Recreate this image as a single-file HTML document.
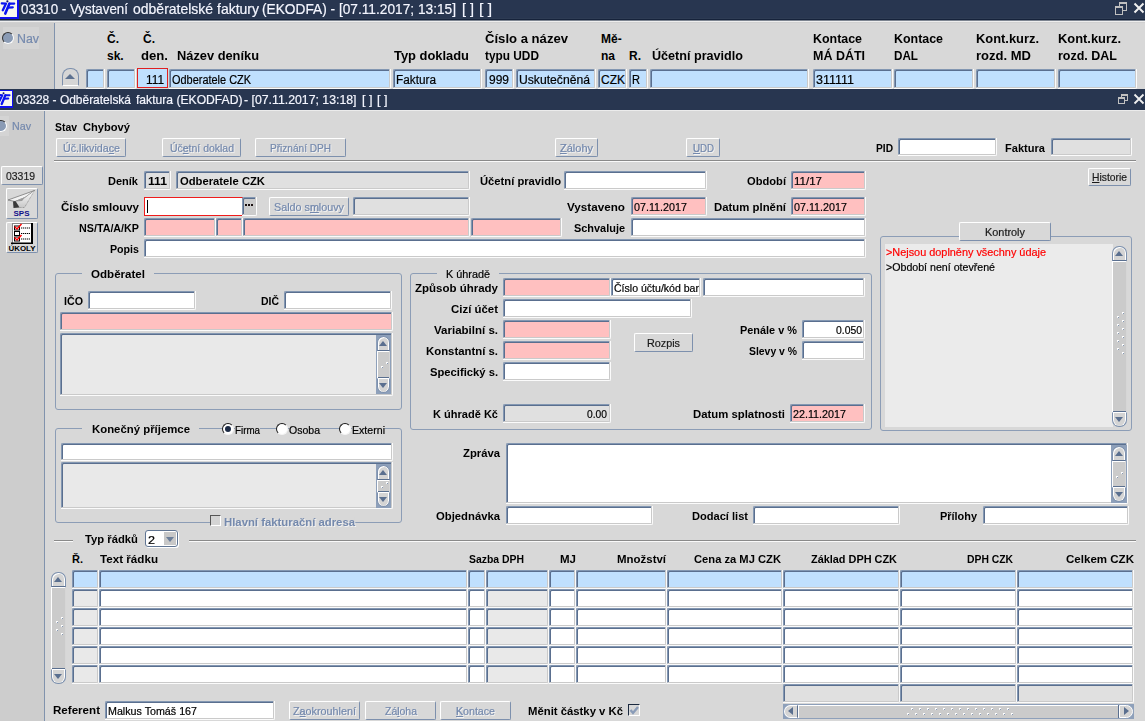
<!DOCTYPE html><html><head><meta charset="utf-8"><style>
html,body{margin:0;padding:0;width:1145px;height:721px;overflow:hidden;background:#d8d8d8;font-family:'Liberation Sans', sans-serif;}
div,span{position:absolute;box-sizing:content-box}
.t{white-space:nowrap;transform-origin:0 0} u{text-decoration:underline;text-decoration-thickness:1px;text-underline-offset:1px}
</style></head><body>
<div style="left:0px;top:0px;width:1145px;height:20px;background:#283650;"></div>
<div style="left:0px;top:18px;width:1145px;height:1px;background:#2d3b53;"></div>
<div style="left:0px;top:19px;width:1145px;height:1px;background:#15223a;"></div>
<div style="left:0px;top:20px;width:1145px;height:1px;background:#7c8490;"></div>
<div style="left:0px;top:21px;width:1145px;height:1px;background:#eeeeee;"></div>
<div style="left:0px;top:22px;width:1145px;height:1px;background:#d0d0d0;"></div>
<div style="left:0px;top:23px;width:1145px;height:66px;background:#d8d8d8;"></div>
<div style="left:0px;top:23px;width:54px;height:66px;background:#cdcdcd;"></div>
<div style="left:54px;top:23px;width:1px;height:66px;background:#8193ad;"></div>
<div style="left:0px;top:0px;width:19px;height:19px;background:#f8f8ee;border-right:2px solid #1010f0;border-bottom:2px solid #1010f0;box-sizing:border-box"></div>
<svg style="position:absolute;left:0px;top:0px" width="19" height="19" viewBox="0 0 19 19"><g stroke-linecap="round" fill="none"><path d="M1.8 3.4 L6.0 3.6 L2.8 10.2" stroke="#0a14f0" stroke-width="2.3" stroke-linejoin="round"/><circle cx="7.4" cy="1.3" r="1.1" fill="#101070" stroke="none"/><path d="M9.4 3.8 L5.3 13.6" stroke="#0a14f0" stroke-width="2.6"/><path d="M9.2 3.6 L14.2 3.6 M8.0 7.6 L12.8 7.4" stroke="#0a14f0" stroke-width="2.2"/></g></svg>
<span id="t0" class="t" style="left:21px;top:1px;font-size:15px;line-height:15px;font-weight:normal;color:#f4f6ff;-webkit-text-stroke:0.2px currentColor;transform:scaleX(0.8890);">03310 - Vystavení</span>
<span id="t1" class="t" style="left:133px;top:1px;font-size:15px;line-height:15px;font-weight:normal;color:#f4f6ff;-webkit-text-stroke:0.2px currentColor;transform:scaleX(0.9328);">odběratelské faktury</span>
<span id="t2" class="t" style="left:262px;top:1px;font-size:15px;line-height:15px;font-weight:normal;color:#f4f6ff;-webkit-text-stroke:0.2px currentColor;transform:scaleX(0.9136);">(EKODFA) - [07.11.2017; 13:15]</span>
<span id="t3" class="t" style="left:462px;top:1px;font-size:15px;line-height:15px;font-weight:normal;color:#f4f6ff;-webkit-text-stroke:0.2px currentColor;transform:scaleX(0.9588);">[ ]</span>
<span id="t4" class="t" style="left:479px;top:1px;font-size:15px;line-height:15px;font-weight:normal;color:#f4f6ff;-webkit-text-stroke:0.2px currentColor;transform:scaleX(1.0387);">[ ]</span>
<div style="left:1119px;top:2px;width:6px;height:6px;border:1px solid #c0c0c0;border-top-width:2px"></div>
<div style="left:1115px;top:6px;width:6px;height:6px;border:1px solid #c0c0c0;border-top-width:2px;background:#283650"></div>
<svg style="position:absolute;left:1133px;top:2px" width="12" height="12" viewBox="0 0 12 12"><path d="M1.5 1.5 L10.5 10.5 M10.5 1.5 L1.5 10.5" stroke="#f0f0f0" stroke-width="2"/></svg>
<div style="left:3px;top:27px;width:36px;height:22px;background:#d4d4d4;"></div>
<div style="left:2px;top:32px;width:10px;height:10px;border-radius:50%;background:#8a9bb5;border:1px solid #fff;border-top-color:#333;border-left-color:#333"></div>
<span id="t5" class="t" style="left:17px;top:33px;font-size:12px;line-height:12px;font-weight:normal;color:#7489ad;-webkit-text-stroke:0.2px currentColor;transform:scaleX(1.0307);">Nav</span>
<span id="t6" class="t" style="left:107px;top:33px;font-size:12px;line-height:12px;font-weight:bold;color:#000;">Č.</span>
<span id="t7" class="t" style="left:107px;top:50px;font-size:12px;line-height:12px;font-weight:bold;color:#000;">sk.</span>
<span id="t8" class="t" style="left:143px;top:33px;font-size:12px;line-height:12px;font-weight:bold;color:#000;">Č.</span>
<span id="t9" class="t" style="left:141px;top:50px;font-size:12px;line-height:12px;font-weight:bold;color:#000;transform:scaleX(1.0944);">den.</span>
<span id="t10" class="t" style="left:177px;top:50px;font-size:12px;line-height:12px;font-weight:bold;color:#000;transform:scaleX(1.0691);">Název deníku</span>
<span id="t11" class="t" style="left:394px;top:50px;font-size:12px;line-height:12px;font-weight:bold;color:#000;transform:scaleX(1.0748);">Typ dokladu</span>
<span id="t12" class="t" style="left:485px;top:33px;font-size:12px;line-height:12px;font-weight:bold;color:#000;transform:scaleX(1.0917);">Číslo a název</span>
<span id="t13" class="t" style="left:485px;top:50px;font-size:12px;line-height:12px;font-weight:bold;color:#000;transform:scaleX(0.9877);">typu UDD</span>
<span id="t14" class="t" style="left:601px;top:33px;font-size:12px;line-height:12px;font-weight:bold;color:#000;">Mě-</span>
<span id="t15" class="t" style="left:601px;top:50px;font-size:12px;line-height:12px;font-weight:bold;color:#000;">na</span>
<span id="t16" class="t" style="left:629px;top:50px;font-size:12px;line-height:12px;font-weight:bold;color:#000;">R.</span>
<span id="t17" class="t" style="left:652px;top:50px;font-size:12px;line-height:12px;font-weight:bold;color:#000;transform:scaleX(1.0497);">Účetní pravidlo</span>
<span id="t18" class="t" style="left:813px;top:33px;font-size:12px;line-height:12px;font-weight:bold;color:#000;transform:scaleX(1.0350);">Kontace</span>
<span id="t19" class="t" style="left:813px;top:50px;font-size:12px;line-height:12px;font-weight:bold;color:#000;transform:scaleX(1.0400);">MÁ DÁTI</span>
<span id="t20" class="t" style="left:894px;top:33px;font-size:12px;line-height:12px;font-weight:bold;color:#000;transform:scaleX(1.0350);">Kontace</span>
<span id="t21" class="t" style="left:894px;top:50px;font-size:12px;line-height:12px;font-weight:bold;color:#000;transform:scaleX(0.9728);">DAL</span>
<span id="t22" class="t" style="left:976px;top:33px;font-size:12px;line-height:12px;font-weight:bold;color:#000;transform:scaleX(1.0738);">Kont.kurz.</span>
<span id="t23" class="t" style="left:976px;top:50px;font-size:12px;line-height:12px;font-weight:bold;color:#000;transform:scaleX(1.0854);">rozd. MD</span>
<span id="t24" class="t" style="left:1058px;top:33px;font-size:12px;line-height:12px;font-weight:bold;color:#000;transform:scaleX(1.0738);">Kont.kurz.</span>
<span id="t25" class="t" style="left:1058px;top:50px;font-size:12px;line-height:12px;font-weight:bold;color:#000;transform:scaleX(1.0411);">rozd. DAL</span>
<div style="left:62px;top:68px;width:15px;height:16px;background:#d6d6d6;border:1px solid #7d90ad;border-bottom-color:#fff;border-radius:8px 8px 1px 1px"></div>
<div style="left:65px;top:74px;width:0;height:0;border-left:5px solid transparent;border-right:5px solid transparent;border-bottom:5px solid #5d7190"></div>
<div style="left:86px;top:69px;width:18px;height:19px;border-right:1px solid #fbfbfb;border-bottom:1px solid #fbfbfb;border-radius:0 0 2px 0"></div>
<div style="left:86px;top:69px;width:16px;height:17px;background:#c0e0fe;border-top:1px solid #8397b2;border-left:1px solid #8397b2;border-right:1px solid #cacaca;border-bottom:1px solid #cacaca;box-shadow:inset 1px 1px 0 #5a6f8f;border-radius:2px 1px 2px 1px"></div>
<div style="left:107px;top:69px;width:28px;height:19px;border-right:1px solid #fbfbfb;border-bottom:1px solid #fbfbfb;border-radius:0 0 2px 0"></div>
<div style="left:107px;top:69px;width:26px;height:17px;background:#c0e0fe;border-top:1px solid #8397b2;border-left:1px solid #8397b2;border-right:1px solid #cacaca;border-bottom:1px solid #cacaca;box-shadow:inset 1px 1px 0 #5a6f8f;border-radius:2px 1px 2px 1px"></div>
<div style="left:169px;top:69px;width:221px;height:19px;border-right:1px solid #fbfbfb;border-bottom:1px solid #fbfbfb;border-radius:0 0 2px 0"></div>
<div style="left:169px;top:69px;width:219px;height:17px;background:#c0e0fe;border-top:1px solid #8397b2;border-left:1px solid #8397b2;border-right:1px solid #cacaca;border-bottom:1px solid #cacaca;box-shadow:inset 1px 1px 0 #5a6f8f;border-radius:2px 1px 2px 1px"></div>
<div style="left:393px;top:69px;width:88px;height:19px;border-right:1px solid #fbfbfb;border-bottom:1px solid #fbfbfb;border-radius:0 0 2px 0"></div>
<div style="left:393px;top:69px;width:86px;height:17px;background:#c0e0fe;border-top:1px solid #8397b2;border-left:1px solid #8397b2;border-right:1px solid #cacaca;border-bottom:1px solid #cacaca;box-shadow:inset 1px 1px 0 #5a6f8f;border-radius:2px 1px 2px 1px"></div>
<div style="left:485px;top:69px;width:28px;height:19px;border-right:1px solid #fbfbfb;border-bottom:1px solid #fbfbfb;border-radius:0 0 2px 0"></div>
<div style="left:485px;top:69px;width:26px;height:17px;background:#c0e0fe;border-top:1px solid #8397b2;border-left:1px solid #8397b2;border-right:1px solid #cacaca;border-bottom:1px solid #cacaca;box-shadow:inset 1px 1px 0 #5a6f8f;border-radius:2px 1px 2px 1px"></div>
<div style="left:516px;top:69px;width:79px;height:19px;border-right:1px solid #fbfbfb;border-bottom:1px solid #fbfbfb;border-radius:0 0 2px 0"></div>
<div style="left:516px;top:69px;width:77px;height:17px;background:#c0e0fe;border-top:1px solid #8397b2;border-left:1px solid #8397b2;border-right:1px solid #cacaca;border-bottom:1px solid #cacaca;box-shadow:inset 1px 1px 0 #5a6f8f;border-radius:2px 1px 2px 1px"></div>
<div style="left:598px;top:69px;width:28px;height:19px;border-right:1px solid #fbfbfb;border-bottom:1px solid #fbfbfb;border-radius:0 0 2px 0"></div>
<div style="left:598px;top:69px;width:26px;height:17px;background:#c0e0fe;border-top:1px solid #8397b2;border-left:1px solid #8397b2;border-right:1px solid #cacaca;border-bottom:1px solid #cacaca;box-shadow:inset 1px 1px 0 #5a6f8f;border-radius:2px 1px 2px 1px"></div>
<div style="left:629px;top:69px;width:18px;height:19px;border-right:1px solid #fbfbfb;border-bottom:1px solid #fbfbfb;border-radius:0 0 2px 0"></div>
<div style="left:629px;top:69px;width:16px;height:17px;background:#c0e0fe;border-top:1px solid #8397b2;border-left:1px solid #8397b2;border-right:1px solid #cacaca;border-bottom:1px solid #cacaca;box-shadow:inset 1px 1px 0 #5a6f8f;border-radius:2px 1px 2px 1px"></div>
<div style="left:650px;top:69px;width:158px;height:19px;border-right:1px solid #fbfbfb;border-bottom:1px solid #fbfbfb;border-radius:0 0 2px 0"></div>
<div style="left:650px;top:69px;width:156px;height:17px;background:#c0e0fe;border-top:1px solid #8397b2;border-left:1px solid #8397b2;border-right:1px solid #cacaca;border-bottom:1px solid #cacaca;box-shadow:inset 1px 1px 0 #5a6f8f;border-radius:2px 1px 2px 1px"></div>
<div style="left:813px;top:69px;width:79px;height:19px;border-right:1px solid #fbfbfb;border-bottom:1px solid #fbfbfb;border-radius:0 0 2px 0"></div>
<div style="left:813px;top:69px;width:77px;height:17px;background:#c0e0fe;border-top:1px solid #8397b2;border-left:1px solid #8397b2;border-right:1px solid #cacaca;border-bottom:1px solid #cacaca;box-shadow:inset 1px 1px 0 #5a6f8f;border-radius:2px 1px 2px 1px"></div>
<div style="left:894px;top:69px;width:79px;height:19px;border-right:1px solid #fbfbfb;border-bottom:1px solid #fbfbfb;border-radius:0 0 2px 0"></div>
<div style="left:894px;top:69px;width:77px;height:17px;background:#c0e0fe;border-top:1px solid #8397b2;border-left:1px solid #8397b2;border-right:1px solid #cacaca;border-bottom:1px solid #cacaca;box-shadow:inset 1px 1px 0 #5a6f8f;border-radius:2px 1px 2px 1px"></div>
<div style="left:976px;top:69px;width:79px;height:19px;border-right:1px solid #fbfbfb;border-bottom:1px solid #fbfbfb;border-radius:0 0 2px 0"></div>
<div style="left:976px;top:69px;width:77px;height:17px;background:#c0e0fe;border-top:1px solid #8397b2;border-left:1px solid #8397b2;border-right:1px solid #cacaca;border-bottom:1px solid #cacaca;box-shadow:inset 1px 1px 0 #5a6f8f;border-radius:2px 1px 2px 1px"></div>
<div style="left:1058px;top:69px;width:78px;height:19px;border-right:1px solid #fbfbfb;border-bottom:1px solid #fbfbfb;border-radius:0 0 2px 0"></div>
<div style="left:1058px;top:69px;width:76px;height:17px;background:#c0e0fe;border-top:1px solid #8397b2;border-left:1px solid #8397b2;border-right:1px solid #cacaca;border-bottom:1px solid #cacaca;box-shadow:inset 1px 1px 0 #5a6f8f;border-radius:2px 1px 2px 1px"></div>
<div style="left:137px;top:68px;width:31px;height:20px;background:#c0e0fe;border:1px solid #e02020;box-sizing:border-box"></div>
<span id="t26" class="t" style="left:146px;top:74px;font-size:12px;line-height:12px;font-weight:normal;color:#000;-webkit-text-stroke:0.2px currentColor;transform:scaleX(0.9863);">111</span>
<span id="t27" class="t" style="left:172px;top:74px;font-size:12px;line-height:12px;font-weight:normal;color:#000;-webkit-text-stroke:0.2px currentColor;transform:scaleX(0.9110);">Odberatele CZK</span>
<span id="t28" class="t" style="left:396px;top:74px;font-size:12px;line-height:12px;font-weight:normal;color:#000;-webkit-text-stroke:0.2px currentColor;transform:scaleX(0.9831);">Faktura</span>
<span id="t29" class="t" style="left:489px;top:74px;font-size:12px;line-height:12px;font-weight:normal;color:#000;-webkit-text-stroke:0.2px currentColor;transform:scaleX(0.9984);">999</span>
<span id="t30" class="t" style="left:519px;top:74px;font-size:12px;line-height:12px;font-weight:normal;color:#000;-webkit-text-stroke:0.2px currentColor;transform:scaleX(1.0136);">Uskutečněná</span>
<span id="t31" class="t" style="left:601px;top:74px;font-size:12px;line-height:12px;font-weight:normal;color:#000;-webkit-text-stroke:0.2px currentColor;transform:scaleX(1.0000);">CZK</span>
<span id="t32" class="t" style="left:632px;top:74px;font-size:12px;line-height:12px;font-weight:normal;color:#000;-webkit-text-stroke:0.2px currentColor;transform:scaleX(0.9225);">R</span>
<span id="t33" class="t" style="left:816px;top:74px;font-size:12px;line-height:12px;font-weight:normal;color:#000;-webkit-text-stroke:0.2px currentColor;transform:scaleX(1.0415);">311111</span>
<div style="left:0px;top:89px;width:1145px;height:21px;background:#283650;"></div>
<div style="left:0px;top:110px;width:1145px;height:1px;background:#ececec;"></div>
<div style="left:0px;top:111px;width:44px;height:610px;background:#cdcdcd;"></div>
<div style="left:44px;top:111px;width:1px;height:610px;background:#8193ad;"></div>
<div style="left:-4px;top:90px;width:17px;height:18px;background:#f8f8ee;border:1px solid #1010f0;border-bottom-width:2px;box-sizing:border-box"></div>
<svg style="position:absolute;left:-3px;top:91.8px" width="17" height="17" viewBox="0 0 19.2 19.2"><g stroke-linecap="round" fill="none"><path d="M1.8 3.4 L6.0 3.6 L2.8 10.2" stroke="#0a14f0" stroke-width="2.3" stroke-linejoin="round"/><circle cx="7.4" cy="1.3" r="1.1" fill="#101070" stroke="none"/><path d="M9.4 3.8 L5.3 13.6" stroke="#0a14f0" stroke-width="2.6"/><path d="M9.2 3.6 L14.2 3.6 M8.0 7.6 L12.8 7.4" stroke="#0a14f0" stroke-width="2.2"/></g></svg>
<span id="t34" class="t" style="left:16px;top:93px;font-size:13px;line-height:13px;font-weight:normal;color:#f4f6ff;-webkit-text-stroke:0.2px currentColor;transform:scaleX(0.9198);">03328 - Odběratelská</span>
<span id="t35" class="t" style="left:136px;top:93px;font-size:13px;line-height:13px;font-weight:normal;color:#f4f6ff;-webkit-text-stroke:0.2px currentColor;transform:scaleX(0.9331);">faktura (EKODFAD)</span>
<span id="t36" class="t" style="left:244px;top:93px;font-size:13px;line-height:13px;font-weight:normal;color:#f4f6ff;-webkit-text-stroke:0.2px currentColor;transform:scaleX(0.9451);">- [07.11.2017; 13:18]</span>
<span id="t37" class="t" style="left:362px;top:93px;font-size:13px;line-height:13px;font-weight:normal;color:#f4f6ff;-webkit-text-stroke:0.2px currentColor;transform:scaleX(0.9683);">[ ]</span>
<span id="t38" class="t" style="left:377px;top:93px;font-size:13px;line-height:13px;font-weight:normal;color:#f4f6ff;-webkit-text-stroke:0.2px currentColor;transform:scaleX(0.9683);">[ ]</span>
<div style="left:1121px;top:94px;width:5px;height:4px;border:1px solid #c0c0c0;border-top-width:2px"></div>
<div style="left:1118px;top:97px;width:5px;height:4px;border:1px solid #c0c0c0;border-top-width:2px;background:#283650"></div>
<svg style="position:absolute;left:1133px;top:93px" width="12" height="12" viewBox="0 0 12 12"><path d="M1.5 1.5 L10.5 10.5 M10.5 1.5 L1.5 10.5" stroke="#f0f0f0" stroke-width="1.8"/></svg>
<div style="left:0px;top:116px;width:9px;height:20px;background:#d4d4d4;"></div>
<div style="left:-5px;top:120px;width:10px;height:10px;border-radius:50%;background:#8a9bb5;border:1px solid #fff;border-top-color:#333;border-left-color:#333"></div>
<span id="t39" class="t" style="left:12px;top:121px;font-size:11px;line-height:11px;font-weight:normal;color:#7489ad;-webkit-text-stroke:0.2px currentColor;transform:scaleX(0.9712);">Nav</span>
<div style="left:1px;top:166px;width:40px;height:17px;background:#d8d8d8;border:1px solid #fff;border-right-color:#7d90ad;border-bottom-color:#7d90ad;border-radius:2px"></div>
<span id="t40" class="t" style="left:6px;top:171px;font-size:11px;line-height:11px;font-weight:normal;color:#222;-webkit-text-stroke:0.2px currentColor;transform:scaleX(0.9479);">03319</span>
<div style="left:6px;top:188px;width:30px;height:29px;background:#d8d8d8;border:1px solid #fff;border-right-color:#7d90ad;border-bottom-color:#7d90ad;border-radius:2px"></div>
<div style="left:6px;top:222px;width:30px;height:29px;background:#d8d8d8;border:1px solid #fff;border-right-color:#7d90ad;border-bottom-color:#7d90ad;border-radius:2px"></div>
<svg style="position:absolute;left:6px;top:187px" width="32" height="32" viewBox="0 0 32 32"><defs><linearGradient id="pw" x1="0" y1="0" x2="0" y2="1"><stop offset="0" stop-color="#ffffff"/><stop offset="1" stop-color="#c8c8c8"/></linearGradient></defs><path d="M2 13 L28.5 3.5 L19 10.5 L9 14.5 Z" fill="#f2f2f2" stroke="#6a6a6a" stroke-width="0.7"/><path d="M19 10.5 L28.5 3.5 L18.5 20.5 L13.5 20.5 L9 14.5 Z" fill="url(#pw)" stroke="#777" stroke-width="0.6" stroke-dasharray="1 0.6"/><path d="M7 14.5 L9.5 14 L13.5 20.5 L7.5 21 Z" fill="#3a3a3a"/><path d="M9 14.5 L19 10.5 L16 14" fill="#9a9a9a"/><text x="15.5" y="29" font-family="Liberation Sans" font-weight="bold" font-size="8" fill="#10108a" text-anchor="middle" textLength="16" lengthAdjust="spacingAndGlyphs">SPS</text></svg>
<svg style="position:absolute;left:6px;top:221px" width="32" height="32" viewBox="0 0 32 32"><rect x="6.5" y="2.5" width="19" height="20" fill="#fff" stroke="#888" stroke-width="1"/><rect x="25" y="2" width="2" height="21" fill="#000"/><rect x="5" y="21.5" width="22" height="1.5" fill="#000"/><rect x="8.5" y="5" width="5" height="4" fill="#fff" stroke="#000" stroke-width="1"/><rect x="8.5" y="10.5" width="5" height="4" fill="#fff" stroke="#000" stroke-width="1"/><rect x="8.5" y="16" width="5" height="4" fill="#fff" stroke="#000" stroke-width="1"/><path d="M8.5 5.5 L11 8 L15.5 3 M8.5 16.5 L11 19 L15.5 14" stroke="#f00" stroke-width="1.4" fill="none"/><path d="M15 7 H24 M15 12.5 H24 M15 18 H24" stroke="#000" stroke-width="1" stroke-dasharray="1.3 0.7"/><text x="16" y="30" font-family="Liberation Sans" font-weight="bold" font-size="7.5" fill="#000" text-anchor="middle" textLength="27" lengthAdjust="spacingAndGlyphs">ÚKOLY</text></svg>
<span id="t41" class="t" style="left:55px;top:122px;font-size:11px;line-height:11px;font-weight:bold;color:#000;transform:scaleX(0.9462);">Stav</span>
<span id="t42" class="t" style="left:83px;top:122px;font-size:11px;line-height:11px;font-weight:bold;color:#000;transform:scaleX(1.0114);">Chybový</span>
<div style="left:56px;top:138px;width:68px;height:17px;background:#d8d8d8;border:1px solid #fff;border-right-color:#7d90ad;border-bottom-color:#7d90ad;border-radius:2px"></div>
<span id="t43" class="t" style="left:62.5px;top:143px;font-size:11px;line-height:11px;font-weight:normal;color:#7489ad;-webkit-text-stroke:0.2px currentColor;text-shadow:1px 1px 0 #f4f4f4;transform:scaleX(0.9710);">Úč.likvida<u>c</u>e</span>
<div style="left:162px;top:138px;width:77px;height:17px;background:#d8d8d8;border:1px solid #fff;border-right-color:#7d90ad;border-bottom-color:#7d90ad;border-radius:2px"></div>
<span id="t44" class="t" style="left:169.5px;top:143px;font-size:11px;line-height:11px;font-weight:normal;color:#7489ad;-webkit-text-stroke:0.2px currentColor;text-shadow:1px 1px 0 #f4f4f4;transform:scaleX(0.9512);">Úč<u>e</u>tní doklad</span>
<div style="left:255px;top:138px;width:89px;height:17px;background:#d8d8d8;border:1px solid #fff;border-right-color:#7d90ad;border-bottom-color:#7d90ad;border-radius:2px"></div>
<span id="t45" class="t" style="left:270.0px;top:143px;font-size:11px;line-height:11px;font-weight:normal;color:#7489ad;-webkit-text-stroke:0.2px currentColor;text-shadow:1px 1px 0 #f4f4f4;transform:scaleX(0.9154);">Přiznání DPH</span>
<div style="left:555px;top:138px;width:41px;height:17px;background:#d8d8d8;border:1px solid #fff;border-right-color:#7d90ad;border-bottom-color:#7d90ad;border-radius:2px"></div>
<span id="t46" class="t" style="left:560.0px;top:143px;font-size:11px;line-height:11px;font-weight:normal;color:#7489ad;-webkit-text-stroke:0.2px currentColor;text-shadow:1px 1px 0 #f4f4f4;transform:scaleX(0.9991);"><u>Z</u>álohy</span>
<div style="left:686px;top:138px;width:32px;height:17px;background:#d8d8d8;border:1px solid #fff;border-right-color:#7d90ad;border-bottom-color:#7d90ad;border-radius:2px"></div>
<span id="t47" class="t" style="left:692.5px;top:143px;font-size:11px;line-height:11px;font-weight:normal;color:#7489ad;-webkit-text-stroke:0.2px currentColor;text-shadow:1px 1px 0 #f4f4f4;transform:scaleX(0.8807);"><u>U</u>DD</span>
<span id="t48" class="t" style="left:876px;top:143px;font-size:11px;line-height:11px;font-weight:bold;color:#000;transform:scaleX(0.9267);">PID</span>
<div style="left:898px;top:138px;width:98px;height:17px;border-right:1px solid #fbfbfb;border-bottom:1px solid #fbfbfb;border-radius:0 0 2px 0"></div>
<div style="left:898px;top:138px;width:96px;height:15px;background:#ffffff;border-top:1px solid #8397b2;border-left:1px solid #8397b2;border-right:1px solid #cacaca;border-bottom:1px solid #cacaca;box-shadow:inset 1px 1px 0 #5a6f8f;border-radius:2px 1px 2px 1px"></div>
<span id="t49" class="t" style="left:1005px;top:143px;font-size:11px;line-height:11px;font-weight:bold;color:#000;transform:scaleX(1.0063);">Faktura</span>
<div style="left:1051px;top:138px;width:80px;height:17px;border-right:1px solid #fbfbfb;border-bottom:1px solid #fbfbfb;border-radius:0 0 2px 0"></div>
<div style="left:1051px;top:138px;width:78px;height:15px;background:#e0e0e0;border-top:1px solid #8397b2;border-left:1px solid #8397b2;border-right:1px solid #cacaca;border-bottom:1px solid #cacaca;box-shadow:inset 1px 1px 0 #5a6f8f;border-radius:2px 1px 2px 1px"></div>
<div style="left:54px;top:160px;width:1082px;height:1px;background:#8a8a8a;"></div>
<div style="left:54px;top:161px;width:1082px;height:1px;background:#fafafa;"></div>
<div style="left:1088px;top:168px;width:41px;height:16px;background:#d8d8d8;border:1px solid #fff;border-right-color:#7d90ad;border-bottom-color:#7d90ad;border-radius:2px"></div>
<span id="t50" class="t" style="left:1092.0px;top:172px;font-size:11px;line-height:11px;font-weight:normal;color:#1a1a1a;-webkit-text-stroke:0.2px currentColor;transform:scaleX(0.9384);"><u>H</u>istorie</span>
<span id="t51" class="t" style="left:108px;top:176px;font-size:11px;line-height:11px;font-weight:bold;color:#000;transform:scaleX(1.0010);">Deník</span>
<div style="left:144px;top:171px;width:26px;height:18px;border-right:1px solid #fbfbfb;border-bottom:1px solid #fbfbfb;border-radius:0 0 2px 0"></div>
<div style="left:144px;top:171px;width:24px;height:16px;background:#e0e0e0;border-top:1px solid #8397b2;border-left:1px solid #8397b2;border-right:1px solid #cacaca;border-bottom:1px solid #cacaca;box-shadow:inset 1px 1px 0 #5a6f8f;border-radius:2px 1px 2px 1px"></div>
<span id="t52" class="t" style="left:148px;top:176px;font-size:11px;line-height:11px;font-weight:bold;color:#000;transform:scaleX(1.1085);">111</span>
<div style="left:176px;top:171px;width:293px;height:18px;border-right:1px solid #fbfbfb;border-bottom:1px solid #fbfbfb;border-radius:0 0 2px 0"></div>
<div style="left:176px;top:171px;width:291px;height:16px;background:#e0e0e0;border-top:1px solid #8397b2;border-left:1px solid #8397b2;border-right:1px solid #cacaca;border-bottom:1px solid #cacaca;box-shadow:inset 1px 1px 0 #5a6f8f;border-radius:2px 1px 2px 1px"></div>
<span id="t53" class="t" style="left:180px;top:176px;font-size:11px;line-height:11px;font-weight:bold;color:#000;transform:scaleX(1.0224);">Odberatele CZK</span>
<span id="t54" class="t" style="left:480px;top:176px;font-size:11px;line-height:11px;font-weight:bold;color:#000;transform:scaleX(1.0193);">Účetní pravidlo</span>
<div style="left:564px;top:171px;width:142px;height:18px;border-right:1px solid #fbfbfb;border-bottom:1px solid #fbfbfb;border-radius:0 0 2px 0"></div>
<div style="left:564px;top:171px;width:140px;height:16px;background:#ffffff;border-top:1px solid #8397b2;border-left:1px solid #8397b2;border-right:1px solid #cacaca;border-bottom:1px solid #cacaca;box-shadow:inset 1px 1px 0 #5a6f8f;border-radius:2px 1px 2px 1px"></div>
<span id="t55" class="t" style="left:747px;top:176px;font-size:11px;line-height:11px;font-weight:bold;color:#000;transform:scaleX(1.0130);">Období</span>
<div style="left:791px;top:171px;width:74px;height:18px;border-right:1px solid #fbfbfb;border-bottom:1px solid #fbfbfb;border-radius:0 0 2px 0"></div>
<div style="left:791px;top:171px;width:72px;height:16px;background:#ffc0c0;border-top:1px solid #8397b2;border-left:1px solid #8397b2;border-right:1px solid #cacaca;border-bottom:1px solid #cacaca;box-shadow:inset 1px 1px 0 #5a6f8f;border-radius:2px 1px 2px 1px"></div>
<span id="t56" class="t" style="left:794px;top:176px;font-size:11px;line-height:11px;font-weight:normal;color:#000;-webkit-text-stroke:0.2px currentColor;transform:scaleX(1.0480);">11/17</span>
<span id="t57" class="t" style="left:61px;top:202px;font-size:11px;line-height:11px;font-weight:bold;color:#000;transform:scaleX(1.0459);">Číslo smlouvy</span>
<div style="left:144px;top:197px;width:97px;height:17px;background:#ffffff;border:1px solid #ee1c1c"></div>
<div style="left:147px;top:200px;width:1px;height:13px;background:#000;"></div>
<div style="left:242px;top:197px;width:14px;height:18px;border-right:1px solid #fbfbfb;border-bottom:1px solid #fbfbfb;border-radius:0 0 2px 0"></div>
<div style="left:242px;top:197px;width:12px;height:16px;background:#cccccc;border-top:1px solid #8397b2;border-left:1px solid #8397b2;border-right:1px solid #cacaca;border-bottom:1px solid #cacaca;box-shadow:inset 1px 1px 0 #5a6f8f;border-radius:2px 1px 2px 1px"></div>
<div style="left:245px;top:204px;width:2px;height:2px;background:#1a1010;"></div>
<div style="left:248px;top:204px;width:2px;height:2px;background:#1a1010;"></div>
<div style="left:251px;top:204px;width:2px;height:2px;background:#1a1010;"></div>
<div style="left:269px;top:197px;width:78px;height:17px;background:#d8d8d8;border:1px solid #fff;border-right-color:#7d90ad;border-bottom-color:#7d90ad;border-radius:2px"></div>
<span id="t58" class="t" style="left:274.0px;top:202px;font-size:11px;line-height:11px;font-weight:normal;color:#7489ad;-webkit-text-stroke:0.2px currentColor;text-shadow:1px 1px 0 #f4f4f4;transform:scaleX(0.9782);">Saldo s<u>m</u>louvy</span>
<div style="left:353px;top:197px;width:116px;height:18px;border-right:1px solid #fbfbfb;border-bottom:1px solid #fbfbfb;border-radius:0 0 2px 0"></div>
<div style="left:353px;top:197px;width:114px;height:16px;background:#e0e0e0;border-top:1px solid #8397b2;border-left:1px solid #8397b2;border-right:1px solid #cacaca;border-bottom:1px solid #cacaca;box-shadow:inset 1px 1px 0 #5a6f8f;border-radius:2px 1px 2px 1px"></div>
<span id="t59" class="t" style="left:567px;top:202px;font-size:11px;line-height:11px;font-weight:bold;color:#000;transform:scaleX(1.0618);">Vystaveno</span>
<div style="left:631px;top:197px;width:75px;height:18px;border-right:1px solid #fbfbfb;border-bottom:1px solid #fbfbfb;border-radius:0 0 2px 0"></div>
<div style="left:631px;top:197px;width:73px;height:16px;background:#ffc0c0;border-top:1px solid #8397b2;border-left:1px solid #8397b2;border-right:1px solid #cacaca;border-bottom:1px solid #cacaca;box-shadow:inset 1px 1px 0 #5a6f8f;border-radius:2px 1px 2px 1px"></div>
<span id="t60" class="t" style="left:634px;top:202px;font-size:11px;line-height:11px;font-weight:normal;color:#000;-webkit-text-stroke:0.2px currentColor;transform:scaleX(0.9770);">07.11.2017</span>
<span id="t61" class="t" style="left:714px;top:202px;font-size:11px;line-height:11px;font-weight:bold;color:#000;transform:scaleX(1.0334);">Datum plnění</span>
<div style="left:791px;top:197px;width:74px;height:18px;border-right:1px solid #fbfbfb;border-bottom:1px solid #fbfbfb;border-radius:0 0 2px 0"></div>
<div style="left:791px;top:197px;width:72px;height:16px;background:#ffc0c0;border-top:1px solid #8397b2;border-left:1px solid #8397b2;border-right:1px solid #cacaca;border-bottom:1px solid #cacaca;box-shadow:inset 1px 1px 0 #5a6f8f;border-radius:2px 1px 2px 1px"></div>
<span id="t62" class="t" style="left:794px;top:202px;font-size:11px;line-height:11px;font-weight:normal;color:#000;-webkit-text-stroke:0.2px currentColor;transform:scaleX(0.9770);">07.11.2017</span>
<span id="t63" class="t" style="left:79px;top:223px;font-size:11px;line-height:11px;font-weight:bold;color:#000;transform:scaleX(0.9751);">NS/TA/A/KP</span>
<div style="left:144px;top:218px;width:71px;height:18px;border-right:1px solid #fbfbfb;border-bottom:1px solid #fbfbfb;border-radius:0 0 2px 0"></div>
<div style="left:144px;top:218px;width:69px;height:16px;background:#ffc0c0;border-top:1px solid #8397b2;border-left:1px solid #8397b2;border-right:1px solid #cacaca;border-bottom:1px solid #cacaca;box-shadow:inset 1px 1px 0 #5a6f8f;border-radius:2px 1px 2px 1px"></div>
<div style="left:216px;top:218px;width:26px;height:18px;border-right:1px solid #fbfbfb;border-bottom:1px solid #fbfbfb;border-radius:0 0 2px 0"></div>
<div style="left:216px;top:218px;width:24px;height:16px;background:#ffc0c0;border-top:1px solid #8397b2;border-left:1px solid #8397b2;border-right:1px solid #cacaca;border-bottom:1px solid #cacaca;box-shadow:inset 1px 1px 0 #5a6f8f;border-radius:2px 1px 2px 1px"></div>
<div style="left:243px;top:218px;width:226px;height:18px;border-right:1px solid #fbfbfb;border-bottom:1px solid #fbfbfb;border-radius:0 0 2px 0"></div>
<div style="left:243px;top:218px;width:224px;height:16px;background:#ffc0c0;border-top:1px solid #8397b2;border-left:1px solid #8397b2;border-right:1px solid #cacaca;border-bottom:1px solid #cacaca;box-shadow:inset 1px 1px 0 #5a6f8f;border-radius:2px 1px 2px 1px"></div>
<div style="left:471px;top:218px;width:90px;height:18px;border-right:1px solid #fbfbfb;border-bottom:1px solid #fbfbfb;border-radius:0 0 2px 0"></div>
<div style="left:471px;top:218px;width:88px;height:16px;background:#ffc0c0;border-top:1px solid #8397b2;border-left:1px solid #8397b2;border-right:1px solid #cacaca;border-bottom:1px solid #cacaca;box-shadow:inset 1px 1px 0 #5a6f8f;border-radius:2px 1px 2px 1px"></div>
<span id="t64" class="t" style="left:574px;top:223px;font-size:11px;line-height:11px;font-weight:bold;color:#000;transform:scaleX(0.9930);">Schvaluje</span>
<div style="left:631px;top:218px;width:234px;height:18px;border-right:1px solid #fbfbfb;border-bottom:1px solid #fbfbfb;border-radius:0 0 2px 0"></div>
<div style="left:631px;top:218px;width:232px;height:16px;background:#ffffff;border-top:1px solid #8397b2;border-left:1px solid #8397b2;border-right:1px solid #cacaca;border-bottom:1px solid #cacaca;box-shadow:inset 1px 1px 0 #5a6f8f;border-radius:2px 1px 2px 1px"></div>
<span id="t65" class="t" style="left:110px;top:244px;font-size:11px;line-height:11px;font-weight:bold;color:#000;transform:scaleX(0.9682);">Popis</span>
<div style="left:144px;top:239px;width:721px;height:18px;border-right:1px solid #fbfbfb;border-bottom:1px solid #fbfbfb;border-radius:0 0 2px 0"></div>
<div style="left:144px;top:239px;width:719px;height:16px;background:#ffffff;border-top:1px solid #8397b2;border-left:1px solid #8397b2;border-right:1px solid #cacaca;border-bottom:1px solid #cacaca;box-shadow:inset 1px 1px 0 #5a6f8f;border-radius:2px 1px 2px 1px"></div>
<div style="left:880px;top:236px;width:250px;height:193px;border:1px solid #8c9db6;border-radius:3px"></div>
<div style="left:885px;top:244px;width:228px;height:183px;background:#ebebeb;"></div>
<div style="left:1112px;top:260px;width:15px;height:153px;background:#cbcbcb;border-left:1px solid #fff;border-right:1px solid #d6d6d6;box-sizing:border-box"></div>
<div style="left:1112px;top:246px;width:13px;height:13px;background:#d4d4d4;border:1px solid #7d91ae;border-bottom-color:#5a6f8f;border-radius:7px 7px 0 0;box-shadow:inset 1px 1px 0 #fff, inset -1px 0 0 #fff"></div>
<div style="left:1113px;top:261px;width:13px;height:1px;background:#fff;"></div>
<div style="left:1115.0px;top:251px;width:0;height:0;border-left:4.5px solid transparent;border-right:4.5px solid transparent;border-bottom:5px solid #5a6f8f"></div>
<div style="left:1113px;top:411px;width:13px;height:1px;background:#5a6f8f;"></div>
<div style="left:1112px;top:412px;width:13px;height:13px;background:#d4d4d4;border:1px solid #7d91ae;border-top-color:#fff;border-radius:0 0 7px 7px;box-shadow:inset 1px 0 0 #fff, inset -1px 0 0 #fff"></div>
<div style="left:1115.0px;top:417px;width:0;height:0;border-left:4.5px solid transparent;border-right:4.5px solid transparent;border-top:5px solid #5a6f8f"></div>
<div style="left:1122px;top:312px;width:1px;height:1px;background:#fff;box-shadow:1px 0 0 #fff, 0 1px 0 #f4f4f4, 1px 1px 0 #8799b4"></div>
<div style="left:1122px;top:320px;width:1px;height:1px;background:#fff;box-shadow:1px 0 0 #fff, 0 1px 0 #f4f4f4, 1px 1px 0 #8799b4"></div>
<div style="left:1122px;top:328px;width:1px;height:1px;background:#fff;box-shadow:1px 0 0 #fff, 0 1px 0 #f4f4f4, 1px 1px 0 #8799b4"></div>
<div style="left:1122px;top:336px;width:1px;height:1px;background:#fff;box-shadow:1px 0 0 #fff, 0 1px 0 #f4f4f4, 1px 1px 0 #8799b4"></div>
<div style="left:1122px;top:344px;width:1px;height:1px;background:#fff;box-shadow:1px 0 0 #fff, 0 1px 0 #f4f4f4, 1px 1px 0 #8799b4"></div>
<div style="left:1122px;top:352px;width:1px;height:1px;background:#fff;box-shadow:1px 0 0 #fff, 0 1px 0 #f4f4f4, 1px 1px 0 #8799b4"></div>
<div style="left:1117px;top:316px;width:1px;height:1px;background:#fff;box-shadow:1px 0 0 #fff, 0 1px 0 #f4f4f4, 1px 1px 0 #8799b4"></div>
<div style="left:1117px;top:324px;width:1px;height:1px;background:#fff;box-shadow:1px 0 0 #fff, 0 1px 0 #f4f4f4, 1px 1px 0 #8799b4"></div>
<div style="left:1117px;top:332px;width:1px;height:1px;background:#fff;box-shadow:1px 0 0 #fff, 0 1px 0 #f4f4f4, 1px 1px 0 #8799b4"></div>
<div style="left:1117px;top:340px;width:1px;height:1px;background:#fff;box-shadow:1px 0 0 #fff, 0 1px 0 #f4f4f4, 1px 1px 0 #8799b4"></div>
<div style="left:1117px;top:348px;width:1px;height:1px;background:#fff;box-shadow:1px 0 0 #fff, 0 1px 0 #f4f4f4, 1px 1px 0 #8799b4"></div>
<div style="left:959px;top:222px;width:90px;height:17px;background:#d8d8d8;border:1px solid #fff;border-right-color:#7d90ad;border-bottom-color:#7d90ad;border-radius:2px"></div>
<span id="t66" class="t" style="left:985.0px;top:227px;font-size:11px;line-height:11px;font-weight:normal;color:#1a1a1a;-webkit-text-stroke:0.2px currentColor;transform:scaleX(0.9911);">Kontroly</span>
<span id="t67" class="t" style="left:886px;top:247px;font-size:11px;line-height:11px;font-weight:normal;color:#ff0000;-webkit-text-stroke:0.2px currentColor;transform:scaleX(0.9891);">&gt;Nejsou doplněny všechny údaje</span>
<span id="t68" class="t" style="left:886px;top:262px;font-size:11px;line-height:11px;font-weight:normal;color:#000;-webkit-text-stroke:0.2px currentColor;transform:scaleX(0.9659);">&gt;Období není otevřené</span>
<div style="left:55px;top:273px;width:345px;height:135px;border:1px solid #8c9db6;border-radius:3px"></div>
<div style="left:82px;top:272px;width:72px;height:3px;background:#d8d8d8;"></div>
<span id="t69" class="t" style="left:91px;top:269px;font-size:11px;line-height:11px;font-weight:bold;color:#000;transform:scaleX(1.0514);">Odběratel</span>
<span id="t70" class="t" style="left:64px;top:296px;font-size:11px;line-height:11px;font-weight:bold;color:#000;transform:scaleX(0.9712);">IČO</span>
<div style="left:88px;top:291px;width:107px;height:18px;border-right:1px solid #fbfbfb;border-bottom:1px solid #fbfbfb;border-radius:0 0 2px 0"></div>
<div style="left:88px;top:291px;width:105px;height:16px;background:#ffffff;border-top:1px solid #8397b2;border-left:1px solid #8397b2;border-right:1px solid #cacaca;border-bottom:1px solid #cacaca;box-shadow:inset 1px 1px 0 #5a6f8f;border-radius:2px 1px 2px 1px"></div>
<span id="t71" class="t" style="left:261px;top:296px;font-size:11px;line-height:11px;font-weight:bold;color:#000;transform:scaleX(0.9497);">DIČ</span>
<div style="left:284px;top:291px;width:107px;height:18px;border-right:1px solid #fbfbfb;border-bottom:1px solid #fbfbfb;border-radius:0 0 2px 0"></div>
<div style="left:284px;top:291px;width:105px;height:16px;background:#ffffff;border-top:1px solid #8397b2;border-left:1px solid #8397b2;border-right:1px solid #cacaca;border-bottom:1px solid #cacaca;box-shadow:inset 1px 1px 0 #5a6f8f;border-radius:2px 1px 2px 1px"></div>
<div style="left:60px;top:312px;width:332px;height:18px;border-right:1px solid #fbfbfb;border-bottom:1px solid #fbfbfb;border-radius:0 0 2px 0"></div>
<div style="left:60px;top:312px;width:330px;height:16px;background:#ffc0c0;border-top:1px solid #8397b2;border-left:1px solid #8397b2;border-right:1px solid #cacaca;border-bottom:1px solid #cacaca;box-shadow:inset 1px 1px 0 #5a6f8f;border-radius:2px 1px 2px 1px"></div>
<div style="left:60px;top:333px;width:332px;height:62px;border-right:1px solid #fbfbfb;border-bottom:1px solid #fbfbfb;border-radius:0 0 2px 0"></div>
<div style="left:60px;top:333px;width:330px;height:60px;background:#e9e9e9;border-top:1px solid #8397b2;border-left:1px solid #8397b2;border-right:1px solid #cacaca;border-bottom:1px solid #cacaca;box-shadow:inset 1px 1px 0 #5a6f8f;border-radius:2px 1px 2px 1px"></div>
<div style="left:376px;top:335px;width:15px;height:59px;background:#8ea0ba;"></div>
<div style="left:377px;top:350px;width:13px;height:29px;background:#cbcbcb;border-left:1px solid #fff;border-right:1px solid #d6d6d6;box-sizing:border-box"></div>
<div style="left:377px;top:336px;width:11px;height:13px;background:#d4d4d4;border:1px solid #7d91ae;border-bottom-color:#5a6f8f;border-radius:7px 7px 0 0;box-shadow:inset 1px 1px 0 #fff, inset -1px 0 0 #fff"></div>
<div style="left:378px;top:351px;width:11px;height:1px;background:#fff;"></div>
<div style="left:379.0px;top:341px;width:0;height:0;border-left:4.5px solid transparent;border-right:4.5px solid transparent;border-bottom:5px solid #5a6f8f"></div>
<div style="left:378px;top:377px;width:11px;height:1px;background:#5a6f8f;"></div>
<div style="left:377px;top:378px;width:11px;height:13px;background:#d4d4d4;border:1px solid #7d91ae;border-top-color:#fff;border-radius:0 0 7px 7px;box-shadow:inset 1px 0 0 #fff, inset -1px 0 0 #fff"></div>
<div style="left:379.0px;top:383px;width:0;height:0;border-left:4.5px solid transparent;border-right:4.5px solid transparent;border-top:5px solid #5a6f8f"></div>
<div style="left:386px;top:362px;width:1px;height:1px;background:#fff;box-shadow:1px 0 0 #fff, 0 1px 0 #f4f4f4, 1px 1px 0 #8799b4"></div>
<div style="left:381px;top:366px;width:1px;height:1px;background:#fff;box-shadow:1px 0 0 #fff, 0 1px 0 #f4f4f4, 1px 1px 0 #8799b4"></div>
<div style="left:410px;top:273px;width:460px;height:155px;border:1px solid #8c9db6;border-radius:3px"></div>
<div style="left:437px;top:272px;width:62px;height:3px;background:#d8d8d8;"></div>
<span id="t72" class="t" style="left:446px;top:269px;font-size:11px;line-height:11px;font-weight:normal;color:#000;-webkit-text-stroke:0.2px currentColor;transform:scaleX(0.9853);">K úhradě</span>
<span id="t73" class="t" style="left:415px;top:283px;font-size:11px;line-height:11px;font-weight:bold;color:#000;transform:scaleX(1.0446);">Způsob úhrady</span>
<div style="left:503px;top:278px;width:107px;height:18px;border-right:1px solid #fbfbfb;border-bottom:1px solid #fbfbfb;border-radius:0 0 2px 0"></div>
<div style="left:503px;top:278px;width:105px;height:16px;background:#ffc0c0;border-top:1px solid #8397b2;border-left:1px solid #8397b2;border-right:1px solid #cacaca;border-bottom:1px solid #cacaca;box-shadow:inset 1px 1px 0 #5a6f8f;border-radius:2px 1px 2px 1px"></div>
<div style="left:611px;top:278px;width:89px;height:18px;border-right:1px solid #fbfbfb;border-bottom:1px solid #fbfbfb;border-radius:0 0 2px 0"></div>
<div style="left:611px;top:278px;width:87px;height:16px;background:#ffffff;border-top:1px solid #8397b2;border-left:1px solid #8397b2;border-right:1px solid #cacaca;border-bottom:1px solid #cacaca;box-shadow:inset 1px 1px 0 #5a6f8f;border-radius:2px 1px 2px 1px"></div>
<span id="t74" class="t" style="left:614px;top:283px;font-size:11px;line-height:11px;font-weight:normal;color:#000;-webkit-text-stroke:0.2px currentColor;transform:scaleX(0.9588);">Číslo účtu/kód bar</span>
<div style="left:703px;top:278px;width:161px;height:18px;border-right:1px solid #fbfbfb;border-bottom:1px solid #fbfbfb;border-radius:0 0 2px 0"></div>
<div style="left:703px;top:278px;width:159px;height:16px;background:#ffffff;border-top:1px solid #8397b2;border-left:1px solid #8397b2;border-right:1px solid #cacaca;border-bottom:1px solid #cacaca;box-shadow:inset 1px 1px 0 #5a6f8f;border-radius:2px 1px 2px 1px"></div>
<span id="t75" class="t" style="left:451px;top:304px;font-size:11px;line-height:11px;font-weight:bold;color:#000;transform:scaleX(1.0390);">Cizí účet</span>
<div style="left:503px;top:299px;width:188px;height:18px;border-right:1px solid #fbfbfb;border-bottom:1px solid #fbfbfb;border-radius:0 0 2px 0"></div>
<div style="left:503px;top:299px;width:186px;height:16px;background:#ffffff;border-top:1px solid #8397b2;border-left:1px solid #8397b2;border-right:1px solid #cacaca;border-bottom:1px solid #cacaca;box-shadow:inset 1px 1px 0 #5a6f8f;border-radius:2px 1px 2px 1px"></div>
<span id="t76" class="t" style="left:434px;top:325px;font-size:11px;line-height:11px;font-weight:bold;color:#000;transform:scaleX(1.0468);">Variabilní s.</span>
<div style="left:503px;top:320px;width:107px;height:18px;border-right:1px solid #fbfbfb;border-bottom:1px solid #fbfbfb;border-radius:0 0 2px 0"></div>
<div style="left:503px;top:320px;width:105px;height:16px;background:#ffc0c0;border-top:1px solid #8397b2;border-left:1px solid #8397b2;border-right:1px solid #cacaca;border-bottom:1px solid #cacaca;box-shadow:inset 1px 1px 0 #5a6f8f;border-radius:2px 1px 2px 1px"></div>
<span id="t77" class="t" style="left:426px;top:346px;font-size:11px;line-height:11px;font-weight:bold;color:#000;transform:scaleX(1.0334);">Konstantní s.</span>
<div style="left:503px;top:341px;width:107px;height:18px;border-right:1px solid #fbfbfb;border-bottom:1px solid #fbfbfb;border-radius:0 0 2px 0"></div>
<div style="left:503px;top:341px;width:105px;height:16px;background:#ffc0c0;border-top:1px solid #8397b2;border-left:1px solid #8397b2;border-right:1px solid #cacaca;border-bottom:1px solid #cacaca;box-shadow:inset 1px 1px 0 #5a6f8f;border-radius:2px 1px 2px 1px"></div>
<span id="t78" class="t" style="left:430px;top:367px;font-size:11px;line-height:11px;font-weight:bold;color:#000;transform:scaleX(1.0202);">Specifický s.</span>
<div style="left:503px;top:362px;width:107px;height:18px;border-right:1px solid #fbfbfb;border-bottom:1px solid #fbfbfb;border-radius:0 0 2px 0"></div>
<div style="left:503px;top:362px;width:105px;height:16px;background:#ffffff;border-top:1px solid #8397b2;border-left:1px solid #8397b2;border-right:1px solid #cacaca;border-bottom:1px solid #cacaca;box-shadow:inset 1px 1px 0 #5a6f8f;border-radius:2px 1px 2px 1px"></div>
<div style="left:634px;top:333px;width:57px;height:17px;background:#d8d8d8;border:1px solid #fff;border-right-color:#7d90ad;border-bottom-color:#7d90ad;border-radius:2px"></div>
<span id="t79" class="t" style="left:647.0px;top:338px;font-size:11px;line-height:11px;font-weight:normal;color:#1a1a1a;-webkit-text-stroke:0.2px currentColor;transform:scaleX(0.9814);">Rozpis</span>
<span id="t80" class="t" style="left:740px;top:325px;font-size:11px;line-height:11px;font-weight:bold;color:#000;transform:scaleX(0.9916);">Penále v %</span>
<div style="left:802px;top:320px;width:62px;height:18px;border-right:1px solid #fbfbfb;border-bottom:1px solid #fbfbfb;border-radius:0 0 2px 0"></div>
<div style="left:802px;top:320px;width:60px;height:16px;background:#ffffff;border-top:1px solid #8397b2;border-left:1px solid #8397b2;border-right:1px solid #cacaca;border-bottom:1px solid #cacaca;box-shadow:inset 1px 1px 0 #5a6f8f;border-radius:2px 1px 2px 1px"></div>
<span id="t81" class="t" style="left:836px;top:325px;font-size:11px;line-height:11px;font-weight:normal;color:#000;-webkit-text-stroke:0.2px currentColor;transform:scaleX(0.9444);">0.050</span>
<span id="t82" class="t" style="left:749px;top:346px;font-size:11px;line-height:11px;font-weight:bold;color:#000;transform:scaleX(0.9455);">Slevy v %</span>
<div style="left:802px;top:341px;width:62px;height:18px;border-right:1px solid #fbfbfb;border-bottom:1px solid #fbfbfb;border-radius:0 0 2px 0"></div>
<div style="left:802px;top:341px;width:60px;height:16px;background:#ffffff;border-top:1px solid #8397b2;border-left:1px solid #8397b2;border-right:1px solid #cacaca;border-bottom:1px solid #cacaca;box-shadow:inset 1px 1px 0 #5a6f8f;border-radius:2px 1px 2px 1px"></div>
<span id="t83" class="t" style="left:433px;top:409px;font-size:11px;line-height:11px;font-weight:bold;color:#000;transform:scaleX(1.0031);">K úhradě Kč</span>
<div style="left:503px;top:404px;width:107px;height:18px;border-right:1px solid #fbfbfb;border-bottom:1px solid #fbfbfb;border-radius:0 0 2px 0"></div>
<div style="left:503px;top:404px;width:105px;height:16px;background:#e0e0e0;border-top:1px solid #8397b2;border-left:1px solid #8397b2;border-right:1px solid #cacaca;border-bottom:1px solid #cacaca;box-shadow:inset 1px 1px 0 #5a6f8f;border-radius:2px 1px 2px 1px"></div>
<span id="t84" class="t" style="left:587px;top:409px;font-size:11px;line-height:11px;font-weight:normal;color:#000;-webkit-text-stroke:0.2px currentColor;transform:scaleX(0.9336);">0.00</span>
<span id="t85" class="t" style="left:693px;top:409px;font-size:11px;line-height:11px;font-weight:bold;color:#000;transform:scaleX(1.0310);">Datum splatnosti</span>
<div style="left:790px;top:404px;width:74px;height:18px;border-right:1px solid #fbfbfb;border-bottom:1px solid #fbfbfb;border-radius:0 0 2px 0"></div>
<div style="left:790px;top:404px;width:72px;height:16px;background:#ffc0c0;border-top:1px solid #8397b2;border-left:1px solid #8397b2;border-right:1px solid #cacaca;border-bottom:1px solid #cacaca;box-shadow:inset 1px 1px 0 #5a6f8f;border-radius:2px 1px 2px 1px"></div>
<span id="t86" class="t" style="left:793px;top:409px;font-size:11px;line-height:11px;font-weight:normal;color:#000;-webkit-text-stroke:0.2px currentColor;transform:scaleX(0.9770);">22.11.2017</span>
<div style="left:55px;top:428px;width:345px;height:93px;border:1px solid #8c9db6;border-radius:3px"></div>
<div style="left:82px;top:427px;width:117px;height:3px;background:#d8d8d8;"></div>
<span id="t87" class="t" style="left:92px;top:424px;font-size:11px;line-height:11px;font-weight:bold;color:#000;transform:scaleX(1.0341);">Konečný příjemce</span>
<div style="left:222px;top:423px;width:10px;height:10px;border-radius:50%;background:#fff;border:1px solid #f4f4f4;border-top-color:#1a1a1a;border-left-color:#1a1a1a"></div>
<div style="left:225px;top:426px;width:6px;height:6px;border-radius:50%;background:#1c2a44"></div>
<span id="t88" class="t" style="left:235px;top:425px;font-size:11px;line-height:11px;font-weight:normal;color:#000;-webkit-text-stroke:0.2px currentColor;background:#d8d8d8;transform:scaleX(0.8894);">Firma</span>
<div style="left:276px;top:423px;width:10px;height:10px;border-radius:50%;background:#fff;border:1px solid #f4f4f4;border-top-color:#1a1a1a;border-left-color:#1a1a1a"></div>
<span id="t89" class="t" style="left:289px;top:425px;font-size:11px;line-height:11px;font-weight:normal;color:#000;-webkit-text-stroke:0.2px currentColor;background:#d8d8d8;transform:scaleX(0.9561);">Osoba</span>
<div style="left:339px;top:423px;width:10px;height:10px;border-radius:50%;background:#fff;border:1px solid #f4f4f4;border-top-color:#1a1a1a;border-left-color:#1a1a1a"></div>
<span id="t90" class="t" style="left:352px;top:425px;font-size:11px;line-height:11px;font-weight:normal;color:#000;-webkit-text-stroke:0.2px currentColor;background:#d8d8d8;transform:scaleX(0.9635);">Externi</span>
<div style="left:61px;top:443px;width:331px;height:17px;border-right:1px solid #fbfbfb;border-bottom:1px solid #fbfbfb;border-radius:0 0 2px 0"></div>
<div style="left:61px;top:443px;width:329px;height:15px;background:#ffffff;border-top:1px solid #8397b2;border-left:1px solid #8397b2;border-right:1px solid #cacaca;border-bottom:1px solid #cacaca;box-shadow:inset 1px 1px 0 #5a6f8f;border-radius:2px 1px 2px 1px"></div>
<div style="left:61px;top:462px;width:331px;height:46px;border-right:1px solid #fbfbfb;border-bottom:1px solid #fbfbfb;border-radius:0 0 2px 0"></div>
<div style="left:61px;top:462px;width:329px;height:44px;background:#e9e9e9;border-top:1px solid #8397b2;border-left:1px solid #8397b2;border-right:1px solid #cacaca;border-bottom:1px solid #cacaca;box-shadow:inset 1px 1px 0 #5a6f8f;border-radius:2px 1px 2px 1px"></div>
<div style="left:376px;top:464px;width:15px;height:44px;background:#8ea0ba;"></div>
<div style="left:377px;top:479px;width:13px;height:14px;background:#cbcbcb;border-left:1px solid #fff;border-right:1px solid #d6d6d6;box-sizing:border-box"></div>
<div style="left:377px;top:465px;width:11px;height:13px;background:#d4d4d4;border:1px solid #7d91ae;border-bottom-color:#5a6f8f;border-radius:7px 7px 0 0;box-shadow:inset 1px 1px 0 #fff, inset -1px 0 0 #fff"></div>
<div style="left:378px;top:480px;width:11px;height:1px;background:#fff;"></div>
<div style="left:379.0px;top:470px;width:0;height:0;border-left:4.5px solid transparent;border-right:4.5px solid transparent;border-bottom:5px solid #5a6f8f"></div>
<div style="left:378px;top:491px;width:11px;height:1px;background:#5a6f8f;"></div>
<div style="left:377px;top:492px;width:11px;height:13px;background:#d4d4d4;border:1px solid #7d91ae;border-top-color:#fff;border-radius:0 0 7px 7px;box-shadow:inset 1px 0 0 #fff, inset -1px 0 0 #fff"></div>
<div style="left:379.0px;top:497px;width:0;height:0;border-left:4.5px solid transparent;border-right:4.5px solid transparent;border-top:5px solid #5a6f8f"></div>
<div style="left:386px;top:482px;width:1px;height:1px;background:#fff;box-shadow:1px 0 0 #fff, 0 1px 0 #f4f4f4, 1px 1px 0 #8799b4"></div>
<div style="left:381px;top:486px;width:1px;height:1px;background:#fff;box-shadow:1px 0 0 #fff, 0 1px 0 #f4f4f4, 1px 1px 0 #8799b4"></div>
<div style="left:221px;top:520px;width:4px;height:3px;background:#d8d8d8;"></div>
<div style="left:210px;top:515px;width:9px;height:9px;background:#d4d4d4;border:1px solid #fff;border-top-color:#555;border-left-color:#555"></div>
<span id="t91" class="t" style="left:224px;top:517px;font-size:11px;line-height:11px;font-weight:bold;color:#7489ad;text-shadow:1px 1px 0 #f0f0f0;background:#d8d8d8;transform:scaleX(1.0301);">Hlavní fakturační adresa</span>
<span id="t92" class="t" style="left:463px;top:448px;font-size:11px;line-height:11px;font-weight:bold;color:#000;transform:scaleX(1.0256);">Zpráva</span>
<div style="left:506px;top:443px;width:621px;height:60px;border-right:1px solid #fbfbfb;border-bottom:1px solid #fbfbfb;border-radius:0 0 2px 0"></div>
<div style="left:506px;top:443px;width:619px;height:58px;background:#ffffff;border-top:1px solid #8397b2;border-left:1px solid #8397b2;border-right:1px solid #cacaca;border-bottom:1px solid #cacaca;box-shadow:inset 1px 1px 0 #5a6f8f;border-radius:2px 1px 2px 1px"></div>
<div style="left:1111px;top:445px;width:16px;height:58px;background:#8ea0ba;"></div>
<div style="left:1112px;top:460px;width:14px;height:28px;background:#cbcbcb;border-left:1px solid #fff;border-right:1px solid #d6d6d6;box-sizing:border-box"></div>
<div style="left:1112px;top:446px;width:12px;height:13px;background:#d4d4d4;border:1px solid #7d91ae;border-bottom-color:#5a6f8f;border-radius:7px 7px 0 0;box-shadow:inset 1px 1px 0 #fff, inset -1px 0 0 #fff"></div>
<div style="left:1113px;top:461px;width:12px;height:1px;background:#fff;"></div>
<div style="left:1114.5px;top:451px;width:0;height:0;border-left:4.5px solid transparent;border-right:4.5px solid transparent;border-bottom:5px solid #5a6f8f"></div>
<div style="left:1113px;top:486px;width:12px;height:1px;background:#5a6f8f;"></div>
<div style="left:1112px;top:487px;width:12px;height:13px;background:#d4d4d4;border:1px solid #7d91ae;border-top-color:#fff;border-radius:0 0 7px 7px;box-shadow:inset 1px 0 0 #fff, inset -1px 0 0 #fff"></div>
<div style="left:1114.5px;top:492px;width:0;height:0;border-left:4.5px solid transparent;border-right:4.5px solid transparent;border-top:5px solid #5a6f8f"></div>
<div style="left:1121px;top:472px;width:1px;height:1px;background:#fff;box-shadow:1px 0 0 #fff, 0 1px 0 #f4f4f4, 1px 1px 0 #8799b4"></div>
<div style="left:1116px;top:476px;width:1px;height:1px;background:#fff;box-shadow:1px 0 0 #fff, 0 1px 0 #f4f4f4, 1px 1px 0 #8799b4"></div>
<span id="t93" class="t" style="left:436px;top:511px;font-size:11px;line-height:11px;font-weight:bold;color:#000;transform:scaleX(1.0263);">Objednávka</span>
<div style="left:506px;top:506px;width:146px;height:18px;border-right:1px solid #fbfbfb;border-bottom:1px solid #fbfbfb;border-radius:0 0 2px 0"></div>
<div style="left:506px;top:506px;width:144px;height:16px;background:#ffffff;border-top:1px solid #8397b2;border-left:1px solid #8397b2;border-right:1px solid #cacaca;border-bottom:1px solid #cacaca;box-shadow:inset 1px 1px 0 #5a6f8f;border-radius:2px 1px 2px 1px"></div>
<span id="t94" class="t" style="left:692px;top:511px;font-size:11px;line-height:11px;font-weight:bold;color:#000;transform:scaleX(1.0067);">Dodací list</span>
<div style="left:753px;top:506px;width:146px;height:18px;border-right:1px solid #fbfbfb;border-bottom:1px solid #fbfbfb;border-radius:0 0 2px 0"></div>
<div style="left:753px;top:506px;width:144px;height:16px;background:#ffffff;border-top:1px solid #8397b2;border-left:1px solid #8397b2;border-right:1px solid #cacaca;border-bottom:1px solid #cacaca;box-shadow:inset 1px 1px 0 #5a6f8f;border-radius:2px 1px 2px 1px"></div>
<span id="t95" class="t" style="left:940px;top:511px;font-size:11px;line-height:11px;font-weight:bold;color:#000;transform:scaleX(0.9920);">Přílohy</span>
<div style="left:983px;top:506px;width:145px;height:18px;border-right:1px solid #fbfbfb;border-bottom:1px solid #fbfbfb;border-radius:0 0 2px 0"></div>
<div style="left:983px;top:506px;width:143px;height:16px;background:#ffffff;border-top:1px solid #8397b2;border-left:1px solid #8397b2;border-right:1px solid #cacaca;border-bottom:1px solid #cacaca;box-shadow:inset 1px 1px 0 #5a6f8f;border-radius:2px 1px 2px 1px"></div>
<div style="left:54px;top:540px;width:19px;height:1px;background:#8a8a8a;"></div>
<div style="left:54px;top:541px;width:19px;height:1px;background:#fafafa;"></div>
<div style="left:189px;top:540px;width:947px;height:1px;background:#8a8a8a;"></div>
<div style="left:189px;top:541px;width:947px;height:1px;background:#fafafa;"></div>
<span id="t96" class="t" style="left:85px;top:534px;font-size:11px;line-height:11px;font-weight:bold;color:#000;transform:scaleX(1.0238);">Typ řádků</span>
<div style="left:145px;top:530px;width:31px;height:15px;background:#fff;border:1px solid #5f7492;border-radius:3px;box-shadow:1px 1px 0 #fff"></div>
<div style="left:164px;top:532px;width:12px;height:13px;background:#c8c8c8;"></div>
<div style="left:166px;top:537px;width:0;height:0;border-left:4px solid transparent;border-right:4px solid transparent;border-top:5px solid #6a7d99"></div>
<span id="t97" class="t" style="left:148px;top:535px;font-size:11px;line-height:11px;font-weight:normal;color:#000;-webkit-text-stroke:0.2px currentColor;transform:scaleX(1.1429);">2</span>
<span id="t98" class="t" style="left:72px;top:554px;font-size:11px;line-height:11px;font-weight:bold;color:#000;">Ř.</span>
<span id="t99" class="t" style="left:100px;top:554px;font-size:11px;line-height:11px;font-weight:bold;color:#000;transform:scaleX(1.0582);">Text řádku</span>
<span id="t100" class="t" style="left:469px;top:554px;font-size:11px;line-height:11px;font-weight:bold;color:#000;transform:scaleX(0.9470);">Sazba DPH</span>
<span id="t101" class="t" style="left:560px;top:554px;font-size:11px;line-height:11px;font-weight:bold;color:#000;transform:scaleX(1.0470);">MJ</span>
<span id="t102" class="t" style="left:617px;top:554px;font-size:11px;line-height:11px;font-weight:bold;color:#000;transform:scaleX(1.0412);">Množství</span>
<span id="t103" class="t" style="left:694px;top:554px;font-size:11px;line-height:11px;font-weight:bold;color:#000;transform:scaleX(1.0166);">Cena za MJ CZK</span>
<span id="t104" class="t" style="left:811px;top:554px;font-size:11px;line-height:11px;font-weight:bold;color:#000;transform:scaleX(0.9908);">Základ DPH CZK</span>
<span id="t105" class="t" style="left:967px;top:554px;font-size:11px;line-height:11px;font-weight:bold;color:#000;transform:scaleX(0.9409);">DPH CZK</span>
<span id="t106" class="t" style="left:1066px;top:554px;font-size:11px;line-height:11px;font-weight:bold;color:#000;transform:scaleX(1.0494);">Celkem CZK</span>
<div style="left:72px;top:570px;width:26px;height:18px;border-right:1px solid #fbfbfb;border-bottom:1px solid #fbfbfb;border-radius:0 0 2px 0"></div>
<div style="left:72px;top:570px;width:24px;height:16px;background:#c0e0fe;border-top:1px solid #8397b2;border-left:1px solid #8397b2;border-right:1px solid #cacaca;border-bottom:1px solid #cacaca;box-shadow:inset 1px 1px 0 #5a6f8f;border-radius:2px 1px 2px 1px"></div>
<div style="left:99px;top:570px;width:368px;height:18px;border-right:1px solid #fbfbfb;border-bottom:1px solid #fbfbfb;border-radius:0 0 2px 0"></div>
<div style="left:99px;top:570px;width:366px;height:16px;background:#c0e0fe;border-top:1px solid #8397b2;border-left:1px solid #8397b2;border-right:1px solid #cacaca;border-bottom:1px solid #cacaca;box-shadow:inset 1px 1px 0 #5a6f8f;border-radius:2px 1px 2px 1px"></div>
<div style="left:468px;top:570px;width:17px;height:18px;border-right:1px solid #fbfbfb;border-bottom:1px solid #fbfbfb;border-radius:0 0 2px 0"></div>
<div style="left:468px;top:570px;width:15px;height:16px;background:#c0e0fe;border-top:1px solid #8397b2;border-left:1px solid #8397b2;border-right:1px solid #cacaca;border-bottom:1px solid #cacaca;box-shadow:inset 1px 1px 0 #5a6f8f;border-radius:2px 1px 2px 1px"></div>
<div style="left:486px;top:570px;width:62px;height:18px;border-right:1px solid #fbfbfb;border-bottom:1px solid #fbfbfb;border-radius:0 0 2px 0"></div>
<div style="left:486px;top:570px;width:60px;height:16px;background:#c0e0fe;border-top:1px solid #8397b2;border-left:1px solid #8397b2;border-right:1px solid #cacaca;border-bottom:1px solid #cacaca;box-shadow:inset 1px 1px 0 #5a6f8f;border-radius:2px 1px 2px 1px"></div>
<div style="left:549px;top:570px;width:26px;height:18px;border-right:1px solid #fbfbfb;border-bottom:1px solid #fbfbfb;border-radius:0 0 2px 0"></div>
<div style="left:549px;top:570px;width:24px;height:16px;background:#c0e0fe;border-top:1px solid #8397b2;border-left:1px solid #8397b2;border-right:1px solid #cacaca;border-bottom:1px solid #cacaca;box-shadow:inset 1px 1px 0 #5a6f8f;border-radius:2px 1px 2px 1px"></div>
<div style="left:576px;top:570px;width:90px;height:18px;border-right:1px solid #fbfbfb;border-bottom:1px solid #fbfbfb;border-radius:0 0 2px 0"></div>
<div style="left:576px;top:570px;width:88px;height:16px;background:#c0e0fe;border-top:1px solid #8397b2;border-left:1px solid #8397b2;border-right:1px solid #cacaca;border-bottom:1px solid #cacaca;box-shadow:inset 1px 1px 0 #5a6f8f;border-radius:2px 1px 2px 1px"></div>
<div style="left:667px;top:570px;width:115px;height:18px;border-right:1px solid #fbfbfb;border-bottom:1px solid #fbfbfb;border-radius:0 0 2px 0"></div>
<div style="left:667px;top:570px;width:113px;height:16px;background:#c0e0fe;border-top:1px solid #8397b2;border-left:1px solid #8397b2;border-right:1px solid #cacaca;border-bottom:1px solid #cacaca;box-shadow:inset 1px 1px 0 #5a6f8f;border-radius:2px 1px 2px 1px"></div>
<div style="left:783px;top:570px;width:116px;height:18px;border-right:1px solid #fbfbfb;border-bottom:1px solid #fbfbfb;border-radius:0 0 2px 0"></div>
<div style="left:783px;top:570px;width:114px;height:16px;background:#c0e0fe;border-top:1px solid #8397b2;border-left:1px solid #8397b2;border-right:1px solid #cacaca;border-bottom:1px solid #cacaca;box-shadow:inset 1px 1px 0 #5a6f8f;border-radius:2px 1px 2px 1px"></div>
<div style="left:900px;top:570px;width:116px;height:18px;border-right:1px solid #fbfbfb;border-bottom:1px solid #fbfbfb;border-radius:0 0 2px 0"></div>
<div style="left:900px;top:570px;width:114px;height:16px;background:#c0e0fe;border-top:1px solid #8397b2;border-left:1px solid #8397b2;border-right:1px solid #cacaca;border-bottom:1px solid #cacaca;box-shadow:inset 1px 1px 0 #5a6f8f;border-radius:2px 1px 2px 1px"></div>
<div style="left:1017px;top:570px;width:116px;height:18px;border-right:1px solid #fbfbfb;border-bottom:1px solid #fbfbfb;border-radius:0 0 2px 0"></div>
<div style="left:1017px;top:570px;width:114px;height:16px;background:#c0e0fe;border-top:1px solid #8397b2;border-left:1px solid #8397b2;border-right:1px solid #cacaca;border-bottom:1px solid #cacaca;box-shadow:inset 1px 1px 0 #5a6f8f;border-radius:2px 1px 2px 1px"></div>
<div style="left:72px;top:589px;width:26px;height:18px;border-right:1px solid #fbfbfb;border-bottom:1px solid #fbfbfb;border-radius:0 0 2px 0"></div>
<div style="left:72px;top:589px;width:24px;height:16px;background:#e9e9e9;border-top:1px solid #8397b2;border-left:1px solid #8397b2;border-right:1px solid #cacaca;border-bottom:1px solid #cacaca;box-shadow:inset 1px 1px 0 #5a6f8f;border-radius:2px 1px 2px 1px"></div>
<div style="left:99px;top:589px;width:368px;height:18px;border-right:1px solid #fbfbfb;border-bottom:1px solid #fbfbfb;border-radius:0 0 2px 0"></div>
<div style="left:99px;top:589px;width:366px;height:16px;background:#ffffff;border-top:1px solid #8397b2;border-left:1px solid #8397b2;border-right:1px solid #cacaca;border-bottom:1px solid #cacaca;box-shadow:inset 1px 1px 0 #5a6f8f;border-radius:2px 1px 2px 1px"></div>
<div style="left:468px;top:589px;width:17px;height:18px;border-right:1px solid #fbfbfb;border-bottom:1px solid #fbfbfb;border-radius:0 0 2px 0"></div>
<div style="left:468px;top:589px;width:15px;height:16px;background:#ffffff;border-top:1px solid #8397b2;border-left:1px solid #8397b2;border-right:1px solid #cacaca;border-bottom:1px solid #cacaca;box-shadow:inset 1px 1px 0 #5a6f8f;border-radius:2px 1px 2px 1px"></div>
<div style="left:486px;top:589px;width:62px;height:18px;border-right:1px solid #fbfbfb;border-bottom:1px solid #fbfbfb;border-radius:0 0 2px 0"></div>
<div style="left:486px;top:589px;width:60px;height:16px;background:#e9e9e9;border-top:1px solid #8397b2;border-left:1px solid #8397b2;border-right:1px solid #cacaca;border-bottom:1px solid #cacaca;box-shadow:inset 1px 1px 0 #5a6f8f;border-radius:2px 1px 2px 1px"></div>
<div style="left:549px;top:589px;width:26px;height:18px;border-right:1px solid #fbfbfb;border-bottom:1px solid #fbfbfb;border-radius:0 0 2px 0"></div>
<div style="left:549px;top:589px;width:24px;height:16px;background:#ffffff;border-top:1px solid #8397b2;border-left:1px solid #8397b2;border-right:1px solid #cacaca;border-bottom:1px solid #cacaca;box-shadow:inset 1px 1px 0 #5a6f8f;border-radius:2px 1px 2px 1px"></div>
<div style="left:576px;top:589px;width:90px;height:18px;border-right:1px solid #fbfbfb;border-bottom:1px solid #fbfbfb;border-radius:0 0 2px 0"></div>
<div style="left:576px;top:589px;width:88px;height:16px;background:#ffffff;border-top:1px solid #8397b2;border-left:1px solid #8397b2;border-right:1px solid #cacaca;border-bottom:1px solid #cacaca;box-shadow:inset 1px 1px 0 #5a6f8f;border-radius:2px 1px 2px 1px"></div>
<div style="left:667px;top:589px;width:115px;height:18px;border-right:1px solid #fbfbfb;border-bottom:1px solid #fbfbfb;border-radius:0 0 2px 0"></div>
<div style="left:667px;top:589px;width:113px;height:16px;background:#ffffff;border-top:1px solid #8397b2;border-left:1px solid #8397b2;border-right:1px solid #cacaca;border-bottom:1px solid #cacaca;box-shadow:inset 1px 1px 0 #5a6f8f;border-radius:2px 1px 2px 1px"></div>
<div style="left:783px;top:589px;width:116px;height:18px;border-right:1px solid #fbfbfb;border-bottom:1px solid #fbfbfb;border-radius:0 0 2px 0"></div>
<div style="left:783px;top:589px;width:114px;height:16px;background:#ffffff;border-top:1px solid #8397b2;border-left:1px solid #8397b2;border-right:1px solid #cacaca;border-bottom:1px solid #cacaca;box-shadow:inset 1px 1px 0 #5a6f8f;border-radius:2px 1px 2px 1px"></div>
<div style="left:900px;top:589px;width:116px;height:18px;border-right:1px solid #fbfbfb;border-bottom:1px solid #fbfbfb;border-radius:0 0 2px 0"></div>
<div style="left:900px;top:589px;width:114px;height:16px;background:#ffffff;border-top:1px solid #8397b2;border-left:1px solid #8397b2;border-right:1px solid #cacaca;border-bottom:1px solid #cacaca;box-shadow:inset 1px 1px 0 #5a6f8f;border-radius:2px 1px 2px 1px"></div>
<div style="left:1017px;top:589px;width:116px;height:18px;border-right:1px solid #fbfbfb;border-bottom:1px solid #fbfbfb;border-radius:0 0 2px 0"></div>
<div style="left:1017px;top:589px;width:114px;height:16px;background:#ffffff;border-top:1px solid #8397b2;border-left:1px solid #8397b2;border-right:1px solid #cacaca;border-bottom:1px solid #cacaca;box-shadow:inset 1px 1px 0 #5a6f8f;border-radius:2px 1px 2px 1px"></div>
<div style="left:72px;top:608px;width:26px;height:18px;border-right:1px solid #fbfbfb;border-bottom:1px solid #fbfbfb;border-radius:0 0 2px 0"></div>
<div style="left:72px;top:608px;width:24px;height:16px;background:#e9e9e9;border-top:1px solid #8397b2;border-left:1px solid #8397b2;border-right:1px solid #cacaca;border-bottom:1px solid #cacaca;box-shadow:inset 1px 1px 0 #5a6f8f;border-radius:2px 1px 2px 1px"></div>
<div style="left:99px;top:608px;width:368px;height:18px;border-right:1px solid #fbfbfb;border-bottom:1px solid #fbfbfb;border-radius:0 0 2px 0"></div>
<div style="left:99px;top:608px;width:366px;height:16px;background:#ffffff;border-top:1px solid #8397b2;border-left:1px solid #8397b2;border-right:1px solid #cacaca;border-bottom:1px solid #cacaca;box-shadow:inset 1px 1px 0 #5a6f8f;border-radius:2px 1px 2px 1px"></div>
<div style="left:468px;top:608px;width:17px;height:18px;border-right:1px solid #fbfbfb;border-bottom:1px solid #fbfbfb;border-radius:0 0 2px 0"></div>
<div style="left:468px;top:608px;width:15px;height:16px;background:#ffffff;border-top:1px solid #8397b2;border-left:1px solid #8397b2;border-right:1px solid #cacaca;border-bottom:1px solid #cacaca;box-shadow:inset 1px 1px 0 #5a6f8f;border-radius:2px 1px 2px 1px"></div>
<div style="left:486px;top:608px;width:62px;height:18px;border-right:1px solid #fbfbfb;border-bottom:1px solid #fbfbfb;border-radius:0 0 2px 0"></div>
<div style="left:486px;top:608px;width:60px;height:16px;background:#e9e9e9;border-top:1px solid #8397b2;border-left:1px solid #8397b2;border-right:1px solid #cacaca;border-bottom:1px solid #cacaca;box-shadow:inset 1px 1px 0 #5a6f8f;border-radius:2px 1px 2px 1px"></div>
<div style="left:549px;top:608px;width:26px;height:18px;border-right:1px solid #fbfbfb;border-bottom:1px solid #fbfbfb;border-radius:0 0 2px 0"></div>
<div style="left:549px;top:608px;width:24px;height:16px;background:#ffffff;border-top:1px solid #8397b2;border-left:1px solid #8397b2;border-right:1px solid #cacaca;border-bottom:1px solid #cacaca;box-shadow:inset 1px 1px 0 #5a6f8f;border-radius:2px 1px 2px 1px"></div>
<div style="left:576px;top:608px;width:90px;height:18px;border-right:1px solid #fbfbfb;border-bottom:1px solid #fbfbfb;border-radius:0 0 2px 0"></div>
<div style="left:576px;top:608px;width:88px;height:16px;background:#ffffff;border-top:1px solid #8397b2;border-left:1px solid #8397b2;border-right:1px solid #cacaca;border-bottom:1px solid #cacaca;box-shadow:inset 1px 1px 0 #5a6f8f;border-radius:2px 1px 2px 1px"></div>
<div style="left:667px;top:608px;width:115px;height:18px;border-right:1px solid #fbfbfb;border-bottom:1px solid #fbfbfb;border-radius:0 0 2px 0"></div>
<div style="left:667px;top:608px;width:113px;height:16px;background:#ffffff;border-top:1px solid #8397b2;border-left:1px solid #8397b2;border-right:1px solid #cacaca;border-bottom:1px solid #cacaca;box-shadow:inset 1px 1px 0 #5a6f8f;border-radius:2px 1px 2px 1px"></div>
<div style="left:783px;top:608px;width:116px;height:18px;border-right:1px solid #fbfbfb;border-bottom:1px solid #fbfbfb;border-radius:0 0 2px 0"></div>
<div style="left:783px;top:608px;width:114px;height:16px;background:#ffffff;border-top:1px solid #8397b2;border-left:1px solid #8397b2;border-right:1px solid #cacaca;border-bottom:1px solid #cacaca;box-shadow:inset 1px 1px 0 #5a6f8f;border-radius:2px 1px 2px 1px"></div>
<div style="left:900px;top:608px;width:116px;height:18px;border-right:1px solid #fbfbfb;border-bottom:1px solid #fbfbfb;border-radius:0 0 2px 0"></div>
<div style="left:900px;top:608px;width:114px;height:16px;background:#ffffff;border-top:1px solid #8397b2;border-left:1px solid #8397b2;border-right:1px solid #cacaca;border-bottom:1px solid #cacaca;box-shadow:inset 1px 1px 0 #5a6f8f;border-radius:2px 1px 2px 1px"></div>
<div style="left:1017px;top:608px;width:116px;height:18px;border-right:1px solid #fbfbfb;border-bottom:1px solid #fbfbfb;border-radius:0 0 2px 0"></div>
<div style="left:1017px;top:608px;width:114px;height:16px;background:#ffffff;border-top:1px solid #8397b2;border-left:1px solid #8397b2;border-right:1px solid #cacaca;border-bottom:1px solid #cacaca;box-shadow:inset 1px 1px 0 #5a6f8f;border-radius:2px 1px 2px 1px"></div>
<div style="left:72px;top:627px;width:26px;height:18px;border-right:1px solid #fbfbfb;border-bottom:1px solid #fbfbfb;border-radius:0 0 2px 0"></div>
<div style="left:72px;top:627px;width:24px;height:16px;background:#e9e9e9;border-top:1px solid #8397b2;border-left:1px solid #8397b2;border-right:1px solid #cacaca;border-bottom:1px solid #cacaca;box-shadow:inset 1px 1px 0 #5a6f8f;border-radius:2px 1px 2px 1px"></div>
<div style="left:99px;top:627px;width:368px;height:18px;border-right:1px solid #fbfbfb;border-bottom:1px solid #fbfbfb;border-radius:0 0 2px 0"></div>
<div style="left:99px;top:627px;width:366px;height:16px;background:#ffffff;border-top:1px solid #8397b2;border-left:1px solid #8397b2;border-right:1px solid #cacaca;border-bottom:1px solid #cacaca;box-shadow:inset 1px 1px 0 #5a6f8f;border-radius:2px 1px 2px 1px"></div>
<div style="left:468px;top:627px;width:17px;height:18px;border-right:1px solid #fbfbfb;border-bottom:1px solid #fbfbfb;border-radius:0 0 2px 0"></div>
<div style="left:468px;top:627px;width:15px;height:16px;background:#ffffff;border-top:1px solid #8397b2;border-left:1px solid #8397b2;border-right:1px solid #cacaca;border-bottom:1px solid #cacaca;box-shadow:inset 1px 1px 0 #5a6f8f;border-radius:2px 1px 2px 1px"></div>
<div style="left:486px;top:627px;width:62px;height:18px;border-right:1px solid #fbfbfb;border-bottom:1px solid #fbfbfb;border-radius:0 0 2px 0"></div>
<div style="left:486px;top:627px;width:60px;height:16px;background:#e9e9e9;border-top:1px solid #8397b2;border-left:1px solid #8397b2;border-right:1px solid #cacaca;border-bottom:1px solid #cacaca;box-shadow:inset 1px 1px 0 #5a6f8f;border-radius:2px 1px 2px 1px"></div>
<div style="left:549px;top:627px;width:26px;height:18px;border-right:1px solid #fbfbfb;border-bottom:1px solid #fbfbfb;border-radius:0 0 2px 0"></div>
<div style="left:549px;top:627px;width:24px;height:16px;background:#ffffff;border-top:1px solid #8397b2;border-left:1px solid #8397b2;border-right:1px solid #cacaca;border-bottom:1px solid #cacaca;box-shadow:inset 1px 1px 0 #5a6f8f;border-radius:2px 1px 2px 1px"></div>
<div style="left:576px;top:627px;width:90px;height:18px;border-right:1px solid #fbfbfb;border-bottom:1px solid #fbfbfb;border-radius:0 0 2px 0"></div>
<div style="left:576px;top:627px;width:88px;height:16px;background:#ffffff;border-top:1px solid #8397b2;border-left:1px solid #8397b2;border-right:1px solid #cacaca;border-bottom:1px solid #cacaca;box-shadow:inset 1px 1px 0 #5a6f8f;border-radius:2px 1px 2px 1px"></div>
<div style="left:667px;top:627px;width:115px;height:18px;border-right:1px solid #fbfbfb;border-bottom:1px solid #fbfbfb;border-radius:0 0 2px 0"></div>
<div style="left:667px;top:627px;width:113px;height:16px;background:#ffffff;border-top:1px solid #8397b2;border-left:1px solid #8397b2;border-right:1px solid #cacaca;border-bottom:1px solid #cacaca;box-shadow:inset 1px 1px 0 #5a6f8f;border-radius:2px 1px 2px 1px"></div>
<div style="left:783px;top:627px;width:116px;height:18px;border-right:1px solid #fbfbfb;border-bottom:1px solid #fbfbfb;border-radius:0 0 2px 0"></div>
<div style="left:783px;top:627px;width:114px;height:16px;background:#ffffff;border-top:1px solid #8397b2;border-left:1px solid #8397b2;border-right:1px solid #cacaca;border-bottom:1px solid #cacaca;box-shadow:inset 1px 1px 0 #5a6f8f;border-radius:2px 1px 2px 1px"></div>
<div style="left:900px;top:627px;width:116px;height:18px;border-right:1px solid #fbfbfb;border-bottom:1px solid #fbfbfb;border-radius:0 0 2px 0"></div>
<div style="left:900px;top:627px;width:114px;height:16px;background:#ffffff;border-top:1px solid #8397b2;border-left:1px solid #8397b2;border-right:1px solid #cacaca;border-bottom:1px solid #cacaca;box-shadow:inset 1px 1px 0 #5a6f8f;border-radius:2px 1px 2px 1px"></div>
<div style="left:1017px;top:627px;width:116px;height:18px;border-right:1px solid #fbfbfb;border-bottom:1px solid #fbfbfb;border-radius:0 0 2px 0"></div>
<div style="left:1017px;top:627px;width:114px;height:16px;background:#ffffff;border-top:1px solid #8397b2;border-left:1px solid #8397b2;border-right:1px solid #cacaca;border-bottom:1px solid #cacaca;box-shadow:inset 1px 1px 0 #5a6f8f;border-radius:2px 1px 2px 1px"></div>
<div style="left:72px;top:646px;width:26px;height:18px;border-right:1px solid #fbfbfb;border-bottom:1px solid #fbfbfb;border-radius:0 0 2px 0"></div>
<div style="left:72px;top:646px;width:24px;height:16px;background:#e9e9e9;border-top:1px solid #8397b2;border-left:1px solid #8397b2;border-right:1px solid #cacaca;border-bottom:1px solid #cacaca;box-shadow:inset 1px 1px 0 #5a6f8f;border-radius:2px 1px 2px 1px"></div>
<div style="left:99px;top:646px;width:368px;height:18px;border-right:1px solid #fbfbfb;border-bottom:1px solid #fbfbfb;border-radius:0 0 2px 0"></div>
<div style="left:99px;top:646px;width:366px;height:16px;background:#ffffff;border-top:1px solid #8397b2;border-left:1px solid #8397b2;border-right:1px solid #cacaca;border-bottom:1px solid #cacaca;box-shadow:inset 1px 1px 0 #5a6f8f;border-radius:2px 1px 2px 1px"></div>
<div style="left:468px;top:646px;width:17px;height:18px;border-right:1px solid #fbfbfb;border-bottom:1px solid #fbfbfb;border-radius:0 0 2px 0"></div>
<div style="left:468px;top:646px;width:15px;height:16px;background:#ffffff;border-top:1px solid #8397b2;border-left:1px solid #8397b2;border-right:1px solid #cacaca;border-bottom:1px solid #cacaca;box-shadow:inset 1px 1px 0 #5a6f8f;border-radius:2px 1px 2px 1px"></div>
<div style="left:486px;top:646px;width:62px;height:18px;border-right:1px solid #fbfbfb;border-bottom:1px solid #fbfbfb;border-radius:0 0 2px 0"></div>
<div style="left:486px;top:646px;width:60px;height:16px;background:#e9e9e9;border-top:1px solid #8397b2;border-left:1px solid #8397b2;border-right:1px solid #cacaca;border-bottom:1px solid #cacaca;box-shadow:inset 1px 1px 0 #5a6f8f;border-radius:2px 1px 2px 1px"></div>
<div style="left:549px;top:646px;width:26px;height:18px;border-right:1px solid #fbfbfb;border-bottom:1px solid #fbfbfb;border-radius:0 0 2px 0"></div>
<div style="left:549px;top:646px;width:24px;height:16px;background:#ffffff;border-top:1px solid #8397b2;border-left:1px solid #8397b2;border-right:1px solid #cacaca;border-bottom:1px solid #cacaca;box-shadow:inset 1px 1px 0 #5a6f8f;border-radius:2px 1px 2px 1px"></div>
<div style="left:576px;top:646px;width:90px;height:18px;border-right:1px solid #fbfbfb;border-bottom:1px solid #fbfbfb;border-radius:0 0 2px 0"></div>
<div style="left:576px;top:646px;width:88px;height:16px;background:#ffffff;border-top:1px solid #8397b2;border-left:1px solid #8397b2;border-right:1px solid #cacaca;border-bottom:1px solid #cacaca;box-shadow:inset 1px 1px 0 #5a6f8f;border-radius:2px 1px 2px 1px"></div>
<div style="left:667px;top:646px;width:115px;height:18px;border-right:1px solid #fbfbfb;border-bottom:1px solid #fbfbfb;border-radius:0 0 2px 0"></div>
<div style="left:667px;top:646px;width:113px;height:16px;background:#ffffff;border-top:1px solid #8397b2;border-left:1px solid #8397b2;border-right:1px solid #cacaca;border-bottom:1px solid #cacaca;box-shadow:inset 1px 1px 0 #5a6f8f;border-radius:2px 1px 2px 1px"></div>
<div style="left:783px;top:646px;width:116px;height:18px;border-right:1px solid #fbfbfb;border-bottom:1px solid #fbfbfb;border-radius:0 0 2px 0"></div>
<div style="left:783px;top:646px;width:114px;height:16px;background:#ffffff;border-top:1px solid #8397b2;border-left:1px solid #8397b2;border-right:1px solid #cacaca;border-bottom:1px solid #cacaca;box-shadow:inset 1px 1px 0 #5a6f8f;border-radius:2px 1px 2px 1px"></div>
<div style="left:900px;top:646px;width:116px;height:18px;border-right:1px solid #fbfbfb;border-bottom:1px solid #fbfbfb;border-radius:0 0 2px 0"></div>
<div style="left:900px;top:646px;width:114px;height:16px;background:#ffffff;border-top:1px solid #8397b2;border-left:1px solid #8397b2;border-right:1px solid #cacaca;border-bottom:1px solid #cacaca;box-shadow:inset 1px 1px 0 #5a6f8f;border-radius:2px 1px 2px 1px"></div>
<div style="left:1017px;top:646px;width:116px;height:18px;border-right:1px solid #fbfbfb;border-bottom:1px solid #fbfbfb;border-radius:0 0 2px 0"></div>
<div style="left:1017px;top:646px;width:114px;height:16px;background:#ffffff;border-top:1px solid #8397b2;border-left:1px solid #8397b2;border-right:1px solid #cacaca;border-bottom:1px solid #cacaca;box-shadow:inset 1px 1px 0 #5a6f8f;border-radius:2px 1px 2px 1px"></div>
<div style="left:72px;top:665px;width:26px;height:18px;border-right:1px solid #fbfbfb;border-bottom:1px solid #fbfbfb;border-radius:0 0 2px 0"></div>
<div style="left:72px;top:665px;width:24px;height:16px;background:#e9e9e9;border-top:1px solid #8397b2;border-left:1px solid #8397b2;border-right:1px solid #cacaca;border-bottom:1px solid #cacaca;box-shadow:inset 1px 1px 0 #5a6f8f;border-radius:2px 1px 2px 1px"></div>
<div style="left:99px;top:665px;width:368px;height:18px;border-right:1px solid #fbfbfb;border-bottom:1px solid #fbfbfb;border-radius:0 0 2px 0"></div>
<div style="left:99px;top:665px;width:366px;height:16px;background:#ffffff;border-top:1px solid #8397b2;border-left:1px solid #8397b2;border-right:1px solid #cacaca;border-bottom:1px solid #cacaca;box-shadow:inset 1px 1px 0 #5a6f8f;border-radius:2px 1px 2px 1px"></div>
<div style="left:468px;top:665px;width:17px;height:18px;border-right:1px solid #fbfbfb;border-bottom:1px solid #fbfbfb;border-radius:0 0 2px 0"></div>
<div style="left:468px;top:665px;width:15px;height:16px;background:#ffffff;border-top:1px solid #8397b2;border-left:1px solid #8397b2;border-right:1px solid #cacaca;border-bottom:1px solid #cacaca;box-shadow:inset 1px 1px 0 #5a6f8f;border-radius:2px 1px 2px 1px"></div>
<div style="left:486px;top:665px;width:62px;height:18px;border-right:1px solid #fbfbfb;border-bottom:1px solid #fbfbfb;border-radius:0 0 2px 0"></div>
<div style="left:486px;top:665px;width:60px;height:16px;background:#e9e9e9;border-top:1px solid #8397b2;border-left:1px solid #8397b2;border-right:1px solid #cacaca;border-bottom:1px solid #cacaca;box-shadow:inset 1px 1px 0 #5a6f8f;border-radius:2px 1px 2px 1px"></div>
<div style="left:549px;top:665px;width:26px;height:18px;border-right:1px solid #fbfbfb;border-bottom:1px solid #fbfbfb;border-radius:0 0 2px 0"></div>
<div style="left:549px;top:665px;width:24px;height:16px;background:#ffffff;border-top:1px solid #8397b2;border-left:1px solid #8397b2;border-right:1px solid #cacaca;border-bottom:1px solid #cacaca;box-shadow:inset 1px 1px 0 #5a6f8f;border-radius:2px 1px 2px 1px"></div>
<div style="left:576px;top:665px;width:90px;height:18px;border-right:1px solid #fbfbfb;border-bottom:1px solid #fbfbfb;border-radius:0 0 2px 0"></div>
<div style="left:576px;top:665px;width:88px;height:16px;background:#ffffff;border-top:1px solid #8397b2;border-left:1px solid #8397b2;border-right:1px solid #cacaca;border-bottom:1px solid #cacaca;box-shadow:inset 1px 1px 0 #5a6f8f;border-radius:2px 1px 2px 1px"></div>
<div style="left:667px;top:665px;width:115px;height:18px;border-right:1px solid #fbfbfb;border-bottom:1px solid #fbfbfb;border-radius:0 0 2px 0"></div>
<div style="left:667px;top:665px;width:113px;height:16px;background:#ffffff;border-top:1px solid #8397b2;border-left:1px solid #8397b2;border-right:1px solid #cacaca;border-bottom:1px solid #cacaca;box-shadow:inset 1px 1px 0 #5a6f8f;border-radius:2px 1px 2px 1px"></div>
<div style="left:783px;top:665px;width:116px;height:18px;border-right:1px solid #fbfbfb;border-bottom:1px solid #fbfbfb;border-radius:0 0 2px 0"></div>
<div style="left:783px;top:665px;width:114px;height:16px;background:#ffffff;border-top:1px solid #8397b2;border-left:1px solid #8397b2;border-right:1px solid #cacaca;border-bottom:1px solid #cacaca;box-shadow:inset 1px 1px 0 #5a6f8f;border-radius:2px 1px 2px 1px"></div>
<div style="left:900px;top:665px;width:116px;height:18px;border-right:1px solid #fbfbfb;border-bottom:1px solid #fbfbfb;border-radius:0 0 2px 0"></div>
<div style="left:900px;top:665px;width:114px;height:16px;background:#ffffff;border-top:1px solid #8397b2;border-left:1px solid #8397b2;border-right:1px solid #cacaca;border-bottom:1px solid #cacaca;box-shadow:inset 1px 1px 0 #5a6f8f;border-radius:2px 1px 2px 1px"></div>
<div style="left:1017px;top:665px;width:116px;height:18px;border-right:1px solid #fbfbfb;border-bottom:1px solid #fbfbfb;border-radius:0 0 2px 0"></div>
<div style="left:1017px;top:665px;width:114px;height:16px;background:#ffffff;border-top:1px solid #8397b2;border-left:1px solid #8397b2;border-right:1px solid #cacaca;border-bottom:1px solid #cacaca;box-shadow:inset 1px 1px 0 #5a6f8f;border-radius:2px 1px 2px 1px"></div>
<div style="left:783px;top:684px;width:116px;height:18px;border-right:1px solid #fbfbfb;border-bottom:1px solid #fbfbfb;border-radius:0 0 2px 0"></div>
<div style="left:783px;top:684px;width:114px;height:16px;background:#e0e0e0;border-top:1px solid #8397b2;border-left:1px solid #8397b2;border-right:1px solid #cacaca;border-bottom:1px solid #cacaca;box-shadow:inset 1px 1px 0 #5a6f8f;border-radius:2px 1px 2px 1px"></div>
<div style="left:900px;top:684px;width:116px;height:18px;border-right:1px solid #fbfbfb;border-bottom:1px solid #fbfbfb;border-radius:0 0 2px 0"></div>
<div style="left:900px;top:684px;width:114px;height:16px;background:#e0e0e0;border-top:1px solid #8397b2;border-left:1px solid #8397b2;border-right:1px solid #cacaca;border-bottom:1px solid #cacaca;box-shadow:inset 1px 1px 0 #5a6f8f;border-radius:2px 1px 2px 1px"></div>
<div style="left:1017px;top:684px;width:116px;height:18px;border-right:1px solid #fbfbfb;border-bottom:1px solid #fbfbfb;border-radius:0 0 2px 0"></div>
<div style="left:1017px;top:684px;width:114px;height:16px;background:#e0e0e0;border-top:1px solid #8397b2;border-left:1px solid #8397b2;border-right:1px solid #cacaca;border-bottom:1px solid #cacaca;box-shadow:inset 1px 1px 0 #5a6f8f;border-radius:2px 1px 2px 1px"></div>
<div style="left:51px;top:586px;width:15px;height:84px;background:#cbcbcb;border-left:1px solid #fff;border-right:1px solid #d6d6d6;box-sizing:border-box"></div>
<div style="left:51px;top:572px;width:13px;height:13px;background:#d4d4d4;border:1px solid #7d91ae;border-bottom-color:#5a6f8f;border-radius:7px 7px 0 0;box-shadow:inset 1px 1px 0 #fff, inset -1px 0 0 #fff"></div>
<div style="left:52px;top:587px;width:13px;height:1px;background:#fff;"></div>
<div style="left:54.0px;top:577px;width:0;height:0;border-left:4.5px solid transparent;border-right:4.5px solid transparent;border-bottom:5px solid #5a6f8f"></div>
<div style="left:52px;top:668px;width:13px;height:1px;background:#5a6f8f;"></div>
<div style="left:51px;top:669px;width:13px;height:13px;background:#d4d4d4;border:1px solid #7d91ae;border-top-color:#fff;border-radius:0 0 7px 7px;box-shadow:inset 1px 0 0 #fff, inset -1px 0 0 #fff"></div>
<div style="left:54.0px;top:674px;width:0;height:0;border-left:4.5px solid transparent;border-right:4.5px solid transparent;border-top:5px solid #5a6f8f"></div>
<div style="left:61px;top:617px;width:1px;height:1px;background:#fff;box-shadow:1px 0 0 #fff, 0 1px 0 #f4f4f4, 1px 1px 0 #8799b4"></div>
<div style="left:56px;top:621px;width:1px;height:1px;background:#fff;box-shadow:1px 0 0 #fff, 0 1px 0 #f4f4f4, 1px 1px 0 #8799b4"></div>
<div style="left:61px;top:625px;width:1px;height:1px;background:#fff;box-shadow:1px 0 0 #fff, 0 1px 0 #f4f4f4, 1px 1px 0 #8799b4"></div>
<div style="left:56px;top:629px;width:1px;height:1px;background:#fff;box-shadow:1px 0 0 #fff, 0 1px 0 #f4f4f4, 1px 1px 0 #8799b4"></div>
<div style="left:61px;top:633px;width:1px;height:1px;background:#fff;box-shadow:1px 0 0 #fff, 0 1px 0 #f4f4f4, 1px 1px 0 #8799b4"></div>
<div style="left:783px;top:704px;width:351px;height:15px;background:#8ea0ba;"></div>
<div style="left:798px;top:705px;width:320px;height:13px;background:#cbcbcb;border-top:1px solid #fff;box-sizing:border-box"></div>
<div style="left:784px;top:705px;width:12px;height:11px;background:#d4d4d4;border:1px solid #fff;border-right-color:#5a6f8f;border-radius:7px 0 0 7px"></div>
<div style="left:798px;top:705px;width:1px;height:13px;background:#fff;"></div>
<div style="left:788px;top:707px;width:0;height:0;border-top:4.5px solid transparent;border-bottom:4.5px solid transparent;border-right:5px solid #5a6f8f"></div>
<div style="left:1118px;top:705px;width:1px;height:13px;background:#5a6f8f;"></div>
<div style="left:1119px;top:705px;width:12px;height:11px;background:#d4d4d4;border:1px solid #fff;border-left-color:#fff;border-radius:0 7px 7px 0"></div>
<div style="left:1124px;top:707px;width:0;height:0;border-top:4.5px solid transparent;border-bottom:4.5px solid transparent;border-left:5px solid #5a6f8f"></div>
<div style="left:911px;top:708px;width:1px;height:1px;background:#fff;box-shadow:1px 0 0 #fff, 0 1px 0 #f4f4f4, 1px 1px 0 #8799b4"></div>
<div style="left:919px;top:708px;width:1px;height:1px;background:#fff;box-shadow:1px 0 0 #fff, 0 1px 0 #f4f4f4, 1px 1px 0 #8799b4"></div>
<div style="left:927px;top:708px;width:1px;height:1px;background:#fff;box-shadow:1px 0 0 #fff, 0 1px 0 #f4f4f4, 1px 1px 0 #8799b4"></div>
<div style="left:935px;top:708px;width:1px;height:1px;background:#fff;box-shadow:1px 0 0 #fff, 0 1px 0 #f4f4f4, 1px 1px 0 #8799b4"></div>
<div style="left:943px;top:708px;width:1px;height:1px;background:#fff;box-shadow:1px 0 0 #fff, 0 1px 0 #f4f4f4, 1px 1px 0 #8799b4"></div>
<div style="left:951px;top:708px;width:1px;height:1px;background:#fff;box-shadow:1px 0 0 #fff, 0 1px 0 #f4f4f4, 1px 1px 0 #8799b4"></div>
<div style="left:959px;top:708px;width:1px;height:1px;background:#fff;box-shadow:1px 0 0 #fff, 0 1px 0 #f4f4f4, 1px 1px 0 #8799b4"></div>
<div style="left:967px;top:708px;width:1px;height:1px;background:#fff;box-shadow:1px 0 0 #fff, 0 1px 0 #f4f4f4, 1px 1px 0 #8799b4"></div>
<div style="left:975px;top:708px;width:1px;height:1px;background:#fff;box-shadow:1px 0 0 #fff, 0 1px 0 #f4f4f4, 1px 1px 0 #8799b4"></div>
<div style="left:983px;top:708px;width:1px;height:1px;background:#fff;box-shadow:1px 0 0 #fff, 0 1px 0 #f4f4f4, 1px 1px 0 #8799b4"></div>
<div style="left:991px;top:708px;width:1px;height:1px;background:#fff;box-shadow:1px 0 0 #fff, 0 1px 0 #f4f4f4, 1px 1px 0 #8799b4"></div>
<div style="left:999px;top:708px;width:1px;height:1px;background:#fff;box-shadow:1px 0 0 #fff, 0 1px 0 #f4f4f4, 1px 1px 0 #8799b4"></div>
<div style="left:1007px;top:708px;width:1px;height:1px;background:#fff;box-shadow:1px 0 0 #fff, 0 1px 0 #f4f4f4, 1px 1px 0 #8799b4"></div>
<div style="left:907px;top:713px;width:1px;height:1px;background:#fff;box-shadow:1px 0 0 #fff, 0 1px 0 #f4f4f4, 1px 1px 0 #8799b4"></div>
<div style="left:915px;top:713px;width:1px;height:1px;background:#fff;box-shadow:1px 0 0 #fff, 0 1px 0 #f4f4f4, 1px 1px 0 #8799b4"></div>
<div style="left:923px;top:713px;width:1px;height:1px;background:#fff;box-shadow:1px 0 0 #fff, 0 1px 0 #f4f4f4, 1px 1px 0 #8799b4"></div>
<div style="left:931px;top:713px;width:1px;height:1px;background:#fff;box-shadow:1px 0 0 #fff, 0 1px 0 #f4f4f4, 1px 1px 0 #8799b4"></div>
<div style="left:939px;top:713px;width:1px;height:1px;background:#fff;box-shadow:1px 0 0 #fff, 0 1px 0 #f4f4f4, 1px 1px 0 #8799b4"></div>
<div style="left:947px;top:713px;width:1px;height:1px;background:#fff;box-shadow:1px 0 0 #fff, 0 1px 0 #f4f4f4, 1px 1px 0 #8799b4"></div>
<div style="left:955px;top:713px;width:1px;height:1px;background:#fff;box-shadow:1px 0 0 #fff, 0 1px 0 #f4f4f4, 1px 1px 0 #8799b4"></div>
<div style="left:963px;top:713px;width:1px;height:1px;background:#fff;box-shadow:1px 0 0 #fff, 0 1px 0 #f4f4f4, 1px 1px 0 #8799b4"></div>
<div style="left:971px;top:713px;width:1px;height:1px;background:#fff;box-shadow:1px 0 0 #fff, 0 1px 0 #f4f4f4, 1px 1px 0 #8799b4"></div>
<div style="left:979px;top:713px;width:1px;height:1px;background:#fff;box-shadow:1px 0 0 #fff, 0 1px 0 #f4f4f4, 1px 1px 0 #8799b4"></div>
<div style="left:987px;top:713px;width:1px;height:1px;background:#fff;box-shadow:1px 0 0 #fff, 0 1px 0 #f4f4f4, 1px 1px 0 #8799b4"></div>
<div style="left:995px;top:713px;width:1px;height:1px;background:#fff;box-shadow:1px 0 0 #fff, 0 1px 0 #f4f4f4, 1px 1px 0 #8799b4"></div>
<div style="left:1003px;top:713px;width:1px;height:1px;background:#fff;box-shadow:1px 0 0 #fff, 0 1px 0 #f4f4f4, 1px 1px 0 #8799b4"></div>
<div style="left:1011px;top:713px;width:1px;height:1px;background:#fff;box-shadow:1px 0 0 #fff, 0 1px 0 #f4f4f4, 1px 1px 0 #8799b4"></div>
<span id="t107" class="t" style="left:53px;top:705px;font-size:11px;line-height:11px;font-weight:bold;color:#000;transform:scaleX(1.0532);">Referent</span>
<div style="left:105px;top:701px;width:169px;height:18px;border-right:1px solid #fbfbfb;border-bottom:1px solid #fbfbfb;border-radius:0 0 2px 0"></div>
<div style="left:105px;top:701px;width:167px;height:16px;background:#ffffff;border-top:1px solid #8397b2;border-left:1px solid #8397b2;border-right:1px solid #cacaca;border-bottom:1px solid #cacaca;box-shadow:inset 1px 1px 0 #5a6f8f;border-radius:2px 1px 2px 1px"></div>
<span id="t108" class="t" style="left:108px;top:706px;font-size:11px;line-height:11px;font-weight:normal;color:#000;-webkit-text-stroke:0.2px currentColor;transform:scaleX(0.9725);">Malkus Tomáš 167</span>
<div style="left:289px;top:701px;width:69px;height:17px;background:#d8d8d8;border:1px solid #fff;border-right-color:#7d90ad;border-bottom-color:#7d90ad;border-radius:2px"></div>
<span id="t109" class="t" style="left:293.0px;top:706px;font-size:11px;line-height:11px;font-weight:normal;color:#7489ad;-webkit-text-stroke:0.2px currentColor;text-shadow:1px 1px 0 #f4f4f4;transform:scaleX(0.9808);">Z<u>a</u>okrouhlení</span>
<div style="left:365px;top:701px;width:69px;height:17px;background:#d8d8d8;border:1px solid #fff;border-right-color:#7d90ad;border-bottom-color:#7d90ad;border-radius:2px"></div>
<span id="t110" class="t" style="left:384.5px;top:706px;font-size:11px;line-height:11px;font-weight:normal;color:#7489ad;-webkit-text-stroke:0.2px currentColor;text-shadow:1px 1px 0 #f4f4f4;transform:scaleX(0.9508);">Zá<u>l</u>oha</span>
<div style="left:440px;top:701px;width:69px;height:17px;background:#d8d8d8;border:1px solid #fff;border-right-color:#7d90ad;border-bottom-color:#7d90ad;border-radius:2px"></div>
<span id="t111" class="t" style="left:456.0px;top:706px;font-size:11px;line-height:11px;font-weight:normal;color:#7489ad;-webkit-text-stroke:0.2px currentColor;text-shadow:1px 1px 0 #f4f4f4;transform:scaleX(0.9659);"><u>K</u>ontace</span>
<span id="t112" class="t" style="left:528px;top:706px;font-size:11px;line-height:11px;font-weight:bold;color:#000;transform:scaleX(1.0289);">Měnit částky v Kč</span>
<div style="left:628px;top:704px;width:10px;height:10px;background:#d8d8d8;border:1px solid #fff;border-top-color:#1c2a40;border-left-color:#1c2a40"></div>
<svg style="position:absolute;left:629px;top:705px" width="10" height="10"><path d="M1.5 5 L4 8 L9 2" stroke="#8a9cb8" stroke-width="2.4" fill="none"/></svg>
</body></html>
